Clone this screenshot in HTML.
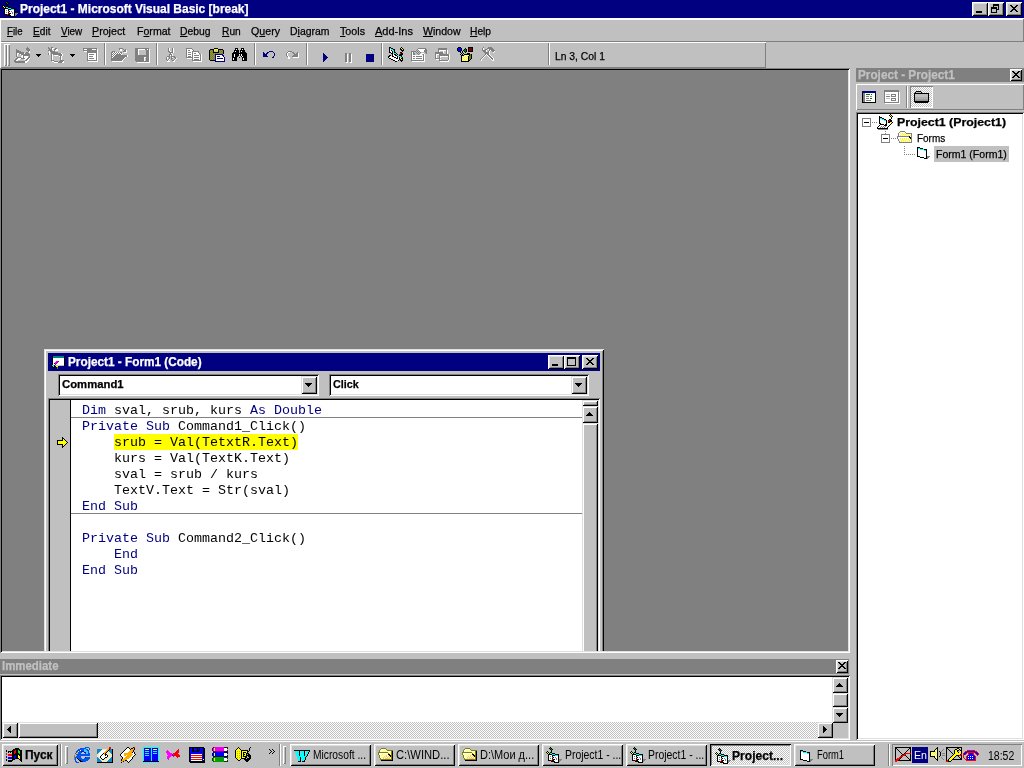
<!DOCTYPE html>
<html><head><meta charset="utf-8"><title>Project1 - Microsoft Visual Basic [break]</title>
<style>
*{box-sizing:border-box;margin:0;padding:0}
html,body{width:1024px;height:768px;overflow:hidden;background:#c0c0c0;font-family:"Liberation Sans",sans-serif;font-size:11px;color:#000}
.a{position:absolute}
svg{position:absolute;shape-rendering:crispEdges;overflow:visible}
.t{position:absolute;white-space:nowrap;line-height:14px;will-change:transform}
.b{font-weight:bold;-webkit-text-stroke:0}
.t{-webkit-text-stroke:0.25px}
.ns{-webkit-text-stroke:0}
.sx{display:inline-block;transform-origin:0 0}
.raised{box-shadow:inset 1px 1px #dfdfdf,inset -1px -1px #000,inset 2px 2px #fff,inset -2px -2px #808080;background:#c0c0c0}
.btn{box-shadow:inset 1px 1px #fff,inset -1px -1px #000,inset 2px 2px #dfdfdf,inset -2px -2px #808080;background:#c0c0c0}
.sbtn{box-shadow:inset 1px 1px #dfdfdf,inset -1px -1px #000,inset 2px 2px #fff,inset -2px -2px #808080;background:#c0c0c0}
.sunk{box-shadow:inset 1px 1px #808080,inset -1px -1px #fff,inset 2px 2px #000,inset -2px -2px #dfdfdf}
.pressed{box-shadow:inset 1px 1px #000,inset -1px -1px #fff,inset 2px 2px #808080,inset -2px -2px #dfdfdf}
.thin-r{box-shadow:inset 1px 1px #fff,inset -1px -1px #808080}
.thin-s{box-shadow:inset 1px 1px #808080,inset -1px -1px #fff}
.dith{background-image:conic-gradient(#fff 25%,#c0c0c0 0 50%,#fff 0 75%,#c0c0c0 0);background-size:2px 2px}
.sep{position:absolute;width:2px;border-left:1px solid #808080;border-right:1px solid #fff}
u{text-decoration:underline;text-underline-offset:1px}
.code{font-family:"Liberation Mono",monospace;font-size:13.33px;line-height:16px;white-space:pre;position:absolute;will-change:transform}
.k{color:#000080}
</style></head><body>

<div class="a" style="left:0;top:0;width:1024px;height:18px;background:#000080"></div>
<div class="t b" id="ttl" style="left:20px;top:2px;color:#fff;font-size:12px;"><span class="sx" style="transform:scaleX(0.9969)">Project1 - Microsoft Visual Basic [break]</span></div>
<svg style="left:2px;top:1px" width="16" height="16" viewBox="0 0 16 16"><path fill="#000" d="M4 0h1v1h-1zM3 1h1v1h-1zM5 1h1v1h-1zM4 2h1v1h-1zM6 2h1v1h-1zM5 3h1v1h-1zM1 4h1v1h-1zM5 4h1v1h-1zM0 5h1v1h-1zM2 5h1v1h-1zM4 5h2v1h-2zM1 6h1v1h-1zM3 6h1v1h-1zM6 6h3v1h-3zM2 7h4v1h-4zM9 7h4v1h-4zM2 8h1v1h-1zM6 8h3v1h-3zM12 8h1v1h-1zM2 9h1v1h-1zM6 9h1v1h-1zM12 9h1v1h-1zM2 10h1v1h-1zM7 10h1v1h-1zM12 10h1v1h-1zM2 11h1v1h-1zM6 11h1v1h-1zM12 11h1v1h-1zM2 12h1v1h-1zM7 12h2v1h-2zM12 12h1v1h-1zM2 13h3v1h-3zM6 13h2v1h-2zM12 13h1v1h-1zM5 14h4v1h-4zM12 14h1v1h-1zM8 15h5v1h-5z"/><path fill="#008000" d="M4 1h1v1h-1zM5 2h1v1h-1z"/><path fill="#ffff00" d="M1 5h1v1h-1zM2 6h1v1h-1z"/><path fill="#00ffff" d="M4 6h2v1h-2zM6 7h3v1h-3zM9 8h3v1h-3z"/><path fill="#fff" d="M3 8h3v1h-3zM3 9h1v1h-1zM5 9h1v1h-1zM7 9h5v1h-5zM3 10h3v1h-3zM8 10h1v1h-1zM10 10h2v1h-2zM3 11h1v1h-1zM5 11h1v1h-1zM7 11h3v1h-3zM11 11h1v1h-1zM3 12h3v1h-3zM9 12h1v1h-1zM11 12h1v1h-1zM8 13h4v1h-4zM9 14h3v1h-3z"/><path fill="#808080" d="M4 9h1v1h-1zM6 10h1v1h-1zM9 10h1v1h-1zM4 11h1v1h-1zM10 11h1v1h-1zM10 12h1v1h-1zM13 12h3v1h-3zM13 13h2v1h-2zM13 14h1v1h-1z"/><path fill="#ff0000" d="M6 12h1v1h-1zM5 13h1v1h-1z"/></svg>
<div class="a btn" style="left:972px;top:2px;width:16px;height:14px"></div>
<div class="a btn" style="left:988px;top:2px;width:16px;height:14px"></div>
<div class="a btn" style="left:1006px;top:2px;width:16px;height:14px"></div>
<svg style="left:976px;top:11px" width="6" height="2" viewBox="0 0 6 2"><path fill="#000" d="M0 0h6v1h-6zM0 1h6v1h-6z"/></svg>
<svg style="left:991px;top:4px" width="8" height="9" viewBox="0 0 8 9"><path fill="#000" d="M2 0h6v1h-6zM2 1h6v1h-6zM2 2h1v1h-1zM7 2h1v1h-1zM0 3h6v1h-6zM7 3h1v1h-1zM0 4h6v1h-6zM7 4h1v1h-1zM0 5h1v1h-1zM5 5h3v1h-3zM0 6h1v1h-1zM5 6h1v1h-1zM0 7h1v1h-1zM5 7h1v1h-1zM0 8h6v1h-6z"/></svg>
<svg style="left:1010px;top:5px" width="8" height="7" viewBox="0 0 8 7"><path fill="#000" d="M0 0h2v1h-2zM6 0h2v1h-2zM1 1h2v1h-2zM5 1h2v1h-2zM2 2h4v1h-4zM3 3h2v1h-2zM2 4h4v1h-4zM1 5h2v1h-2zM5 5h2v1h-2zM0 6h2v1h-2zM6 6h2v1h-2z"/></svg>
<div class="a" style="left:0;top:18px;width:1024px;height:2px;background:#fff"></div>
<div class="t m" id="m0" style="left:7px;top:24px"><span class="sx" style="transform:scaleX(0.8732)"><u>F</u>ile</span></div>
<div class="t m" id="m1" style="left:33px;top:24px"><span class="sx" style="transform:scaleX(0.9226)"><u>E</u>dit</span></div>
<div class="t m" id="m2" style="left:61px;top:24px"><span class="sx" style="transform:scaleX(0.8983)"><u>V</u>iew</span></div>
<div class="t m" id="m3" style="left:92px;top:24px"><span class="sx" style="transform:scaleX(0.9708)"><u>P</u>roject</span></div>
<div class="t m" id="m4" style="left:137px;top:24px"><span class="sx" style="transform:scaleX(0.961)">F<u>o</u>rmat</span></div>
<div class="t m" id="m5" style="left:180px;top:24px"><span class="sx" style="transform:scaleX(0.9403)"><u>D</u>ebug</span></div>
<div class="t m" id="m6" style="left:222px;top:24px"><span class="sx" style="transform:scaleX(0.9281)"><u>R</u>un</span></div>
<div class="t m" id="m7" style="left:251px;top:24px"><span class="sx" style="transform:scaleX(0.9677)">Q<u>u</u>ery</span></div>
<div class="t m" id="m8" style="left:290px;top:24px"><span class="sx" style="transform:scaleX(0.9497)">D<u>i</u>agram</span></div>
<div class="t m" id="m9" style="left:340px;top:24px"><span class="sx" style="transform:scaleX(0.9732)"><u>T</u>ools</span></div>
<div class="t m" id="m10" style="left:375px;top:24px"><span class="sx" style="transform:scaleX(1.0021)"><u>A</u>dd-Ins</span></div>
<div class="t m" id="m11" style="left:423px;top:24px"><span class="sx" style="transform:scaleX(0.9581)"><u>W</u>indow</span></div>
<div class="t m" id="m12" style="left:470px;top:24px"><span class="sx" style="transform:scaleX(0.9275)"><u>H</u>elp</span></div>
<div class="a" style="left:0;top:41px;width:1024px;height:1px;background:#808080"></div>
<div class="a" style="left:1023px;top:19px;width:1px;height:23px;background:#808080"></div>
<div class="a" style="left:0;top:19px;width:1px;height:23px;background:#fff"></div>
<div class="a thin-r" style="left:0;top:42px;width:766px;height:26px"></div>
<div class="a thin-r" style="left:4px;top:44px;width:3px;height:22px"></div>
<div class="a thin-r" style="left:7px;top:44px;width:3px;height:22px"></div>
<div class="sep" style="left:104px;top:43px;height:22px"></div>
<div class="sep" style="left:156px;top:43px;height:22px"></div>
<div class="sep" style="left:254px;top:43px;height:22px"></div>
<div class="sep" style="left:306px;top:43px;height:22px"></div>
<div class="sep" style="left:381px;top:43px;height:22px"></div>
<div class="sep" style="left:548px;top:43px;height:22px"></div>
<div class="t" id="lncol" style="left:555px;top:49px"><span class="sx" style="transform:scaleX(0.9398)">Ln 3, Col 1</span></div>
<svg style="left:14px;top:47px" width="17" height="16" viewBox="0 0 17 16"><path fill="#808080" d="M13 0h1v1h-1zM12 1h3v1h-3zM2 2h1v1h-1zM12 2h4v1h-4zM2 3h3v1h-3zM13 3h3v1h-3zM2 4h5v1h-5zM14 4h1v1h-1zM2 5h8v1h-8zM12 5h2v1h-2zM2 6h1v1h-1zM5 6h5v1h-5zM11 6h4v1h-4zM2 7h1v1h-1zM7 7h9v1h-9zM2 8h1v1h-1zM9 8h7v1h-7zM2 9h1v1h-1zM9 9h1v1h-1zM15 9h1v1h-1zM3 10h4v1h-4zM9 10h1v1h-1zM14 10h2v1h-2zM2 11h2v1h-2zM7 11h4v1h-4zM13 11h2v1h-2zM1 12h2v1h-2zM12 12h2v1h-2zM0 13h2v1h-2zM11 13h2v1h-2zM0 14h11v1h-11zM1 15h10v1h-10z"/><path fill="#fff" d="M15 4h1v1h-1zM15 5h1v1h-1zM3 6h2v1h-2zM10 6h1v1h-1zM3 7h1v1h-1zM6 7h1v1h-1zM3 8h1v1h-1zM8 8h1v1h-1zM7 9h2v1h-2zM10 9h4v1h-4zM8 10h1v1h-1zM10 10h4v1h-4zM4 11h3v1h-3zM11 11h2v1h-2zM15 11h1v1h-1zM3 12h3v1h-3zM10 12h2v1h-2zM14 12h1v1h-1zM2 13h2v1h-2zM13 13h2v1h-2zM11 14h3v1h-3zM11 15h2v1h-2z"/></svg>
<svg style="left:36px;top:54px" width="5" height="3" viewBox="0 0 5 3"><path fill="#000" d="M0 0h5v1h-5zM1 1h3v1h-3zM2 2h1v1h-1z"/></svg>
<svg style="left:48px;top:47px" width="16" height="16" viewBox="0 0 16 16"><path fill="#808080" d="M0 0h1v1h-1zM3 0h2v1h-2zM0 1h2v1h-2zM3 1h1v1h-1zM7 1h2v1h-2zM1 2h3v1h-3zM6 2h2v1h-2zM0 3h4v1h-4zM6 3h1v1h-1zM2 4h5v1h-5zM3 5h7v1h-7zM0 6h1v1h-1zM3 6h10v1h-10zM0 7h1v1h-1zM3 7h1v1h-1zM5 7h9v1h-9zM3 8h1v1h-1zM11 8h3v1h-3zM3 9h1v1h-1zM12 9h1v1h-1zM3 10h1v1h-1zM12 10h1v1h-1zM3 11h1v1h-1zM12 11h1v1h-1zM3 12h1v1h-1zM12 12h1v1h-1zM3 13h3v1h-3zM12 13h4v1h-4zM6 14h4v1h-4zM11 14h4v1h-4zM10 15h4v1h-4z"/><path fill="#fff" d="M4 1h2v1h-2zM4 2h1v1h-1zM8 2h2v1h-2zM5 3h1v1h-1zM7 3h3v1h-3zM1 4h1v1h-1zM1 5h1v1h-1zM1 6h1v1h-1zM13 6h1v1h-1zM1 7h1v1h-1zM4 7h1v1h-1zM14 7h1v1h-1zM4 8h1v1h-1zM6 8h4v1h-4zM14 8h1v1h-1zM4 9h1v1h-1zM11 9h1v1h-1zM13 9h1v1h-1zM4 10h1v1h-1zM13 10h1v1h-1zM4 11h1v1h-1zM13 11h1v1h-1zM4 12h1v1h-1zM13 12h1v1h-1zM4 14h2v1h-2zM15 14h1v1h-1zM6 15h4v1h-4zM14 15h2v1h-2z"/></svg>
<svg style="left:70px;top:54px" width="5" height="3" viewBox="0 0 5 3"><path fill="#000" d="M0 0h5v1h-5zM1 1h3v1h-3zM2 2h1v1h-1z"/></svg>
<svg style="left:83px;top:48px" width="15" height="14" viewBox="0 0 15 14"><path fill="#808080" d="M0 0h14v1h-14zM0 1h1v1h-1zM4 1h5v1h-5zM13 1h1v1h-1zM0 2h14v1h-14zM4 3h10v1h-10zM4 4h10v1h-10zM4 5h1v1h-1zM13 5h1v1h-1zM4 6h1v1h-1zM6 6h5v1h-5zM13 6h1v1h-1zM4 7h1v1h-1zM13 7h1v1h-1zM4 8h1v1h-1zM6 8h4v1h-4zM13 8h1v1h-1zM4 9h1v1h-1zM13 9h1v1h-1zM4 10h1v1h-1zM6 10h5v1h-5zM13 10h1v1h-1zM4 11h1v1h-1zM13 11h1v1h-1zM4 12h10v1h-10z"/><path fill="#fff" d="M1 1h3v1h-3zM9 1h4v1h-4zM14 1h1v1h-1zM14 2h1v1h-1zM1 3h3v1h-3zM14 3h1v1h-1zM14 4h1v1h-1zM5 5h8v1h-8zM14 5h1v1h-1zM5 6h1v1h-1zM11 6h2v1h-2zM14 6h1v1h-1zM5 7h8v1h-8zM14 7h1v1h-1zM5 8h1v1h-1zM10 8h3v1h-3zM14 8h1v1h-1zM5 9h8v1h-8zM14 9h1v1h-1zM5 10h1v1h-1zM11 10h2v1h-2zM14 10h1v1h-1zM5 11h8v1h-8zM14 11h1v1h-1zM14 12h1v1h-1zM5 13h10v1h-10z"/></svg>
<svg style="left:111px;top:48px" width="17" height="14" viewBox="0 0 17 14"><path fill="#808080" d="M8 0h4v1h-4zM8 1h1v1h-1zM12 1h1v1h-1zM14 1h1v1h-1zM13 2h2v1h-2zM1 3h3v1h-3zM12 3h3v1h-3zM0 4h2v1h-2zM3 4h1v1h-1zM5 4h1v1h-1zM7 4h1v1h-1zM9 4h2v1h-2zM0 5h1v1h-1zM2 5h1v1h-1zM4 5h1v1h-1zM6 5h1v1h-1zM8 5h1v1h-1zM10 5h1v1h-1zM0 6h2v1h-2zM3 6h1v1h-1zM5 6h5v1h-5zM0 7h1v1h-1zM2 7h1v1h-1zM4 7h12v1h-12zM0 8h2v1h-2zM3 8h13v1h-13zM0 9h1v1h-1zM2 9h12v1h-12zM0 10h13v1h-13zM0 11h12v1h-12zM0 12h11v1h-11z"/><path fill="#fff" d="M9 1h2v1h-2zM9 2h2v1h-2zM15 2h1v1h-1zM15 3h1v1h-1zM2 4h1v1h-1zM4 4h1v1h-1zM6 4h1v1h-1zM8 4h1v1h-1zM13 4h3v1h-3zM1 5h1v1h-1zM3 5h1v1h-1zM5 5h1v1h-1zM7 5h1v1h-1zM9 5h1v1h-1zM11 5h1v1h-1zM2 6h1v1h-1zM4 6h1v1h-1zM10 6h1v1h-1zM1 7h1v1h-1zM3 7h1v1h-1zM16 7h1v1h-1zM2 8h1v1h-1zM16 8h1v1h-1zM1 9h1v1h-1zM14 9h1v1h-1zM13 10h1v1h-1zM12 11h1v1h-1zM11 12h1v1h-1zM1 13h11v1h-11z"/></svg>
<svg style="left:135px;top:48px" width="15" height="15" viewBox="0 0 15 15"><path fill="#808080" d="M0 0h14v1h-14zM0 1h3v1h-3zM10 1h2v1h-2zM13 1h1v1h-1zM0 2h3v1h-3zM11 2h3v1h-3zM0 3h3v1h-3zM11 3h3v1h-3zM0 4h3v1h-3zM11 4h3v1h-3zM0 5h3v1h-3zM11 5h3v1h-3zM0 6h3v1h-3zM11 6h3v1h-3zM0 7h14v1h-14zM0 8h14v1h-14zM0 9h9v1h-9zM11 9h3v1h-3zM0 10h9v1h-9zM11 10h3v1h-3zM0 11h9v1h-9zM11 11h3v1h-3zM0 12h9v1h-9zM11 12h3v1h-3zM1 13h13v1h-13z"/><path fill="#fff" d="M3 1h7v1h-7zM12 1h1v1h-1zM14 1h1v1h-1zM3 2h1v1h-1zM14 2h1v1h-1zM3 3h1v1h-1zM14 3h1v1h-1zM3 4h1v1h-1zM14 4h1v1h-1zM3 5h1v1h-1zM14 5h1v1h-1zM3 6h1v1h-1zM14 6h1v1h-1zM14 7h1v1h-1zM14 8h1v1h-1zM9 9h2v1h-2zM14 9h1v1h-1zM9 10h1v1h-1zM14 10h1v1h-1zM9 11h1v1h-1zM14 11h1v1h-1zM9 12h1v1h-1zM14 12h1v1h-1zM14 13h1v1h-1zM2 14h13v1h-13z"/></svg>
<svg style="left:166px;top:48px" width="11" height="14" viewBox="0 0 11 14"><path fill="#808080" d="M2 0h1v1h-1zM6 0h1v1h-1zM2 1h1v1h-1zM6 1h1v1h-1zM2 2h1v1h-1zM6 2h1v1h-1zM2 3h2v1h-2zM6 3h1v1h-1zM3 4h4v1h-4zM4 5h1v1h-1zM3 6h3v1h-3zM3 7h1v1h-1zM5 7h1v1h-1zM1 8h3v1h-3zM5 8h4v1h-4zM0 9h1v1h-1zM3 9h1v1h-1zM5 9h1v1h-1zM8 9h2v1h-2zM0 10h1v1h-1zM3 10h1v1h-1zM5 10h2v1h-2zM9 10h1v1h-1zM0 11h1v1h-1zM2 11h1v1h-1zM5 11h1v1h-1zM8 11h1v1h-1zM1 12h1v1h-1zM6 12h2v1h-2z"/><path fill="#fff" d="M3 0h1v1h-1zM7 0h1v1h-1zM3 1h1v1h-1zM7 1h1v1h-1zM3 2h1v1h-1zM7 2h1v1h-1zM4 3h1v1h-1zM7 3h1v1h-1zM7 4h1v1h-1zM5 5h1v1h-1zM6 6h1v1h-1zM4 7h1v1h-1zM6 7h1v1h-1zM1 9h1v1h-1zM6 9h1v1h-1zM1 10h1v1h-1zM10 10h1v1h-1zM3 11h1v1h-1zM9 11h1v1h-1zM2 12h1v1h-1zM8 12h1v1h-1zM1 13h3v1h-3zM7 13h2v1h-2z"/></svg>
<svg style="left:186px;top:48px" width="16" height="14" viewBox="0 0 16 14"><path fill="#808080" d="M0 0h6v1h-6zM0 1h1v1h-1zM6 1h1v1h-1zM0 2h1v1h-1zM2 2h2v1h-2zM7 2h1v1h-1zM0 3h1v1h-1zM6 3h7v1h-7zM0 4h1v1h-1zM2 4h3v1h-3zM6 4h1v1h-1zM12 4h1v1h-1zM0 5h1v1h-1zM6 5h1v1h-1zM8 5h2v1h-2zM13 5h1v1h-1zM0 6h1v1h-1zM2 6h3v1h-3zM6 6h1v1h-1zM14 6h1v1h-1zM0 7h1v1h-1zM6 7h1v1h-1zM8 7h5v1h-5zM14 7h1v1h-1zM0 8h1v1h-1zM2 8h3v1h-3zM6 8h1v1h-1zM14 8h1v1h-1zM0 9h7v1h-7zM8 9h5v1h-5zM14 9h1v1h-1zM6 10h1v1h-1zM14 10h1v1h-1zM6 11h1v1h-1zM8 11h5v1h-5zM14 11h1v1h-1zM6 12h9v1h-9z"/><path fill="#fff" d="M1 1h5v1h-5zM1 2h1v1h-1zM4 2h3v1h-3zM1 3h5v1h-5zM1 4h1v1h-1zM5 4h1v1h-1zM7 4h5v1h-5zM1 5h5v1h-5zM7 5h1v1h-1zM10 5h3v1h-3zM1 6h1v1h-1zM5 6h1v1h-1zM7 6h6v1h-6zM15 6h1v1h-1zM1 7h5v1h-5zM7 7h1v1h-1zM13 7h1v1h-1zM15 7h1v1h-1zM1 8h1v1h-1zM5 8h1v1h-1zM7 8h7v1h-7zM15 8h1v1h-1zM7 9h1v1h-1zM13 9h1v1h-1zM15 9h1v1h-1zM1 10h5v1h-5zM7 10h7v1h-7zM15 10h1v1h-1zM7 11h1v1h-1zM13 11h1v1h-1zM15 11h1v1h-1zM15 12h1v1h-1zM7 13h9v1h-9z"/></svg>
<svg style="left:209px;top:48px" width="16" height="14" viewBox="0 0 16 14"><path fill="#000" d="M5 0h4v1h-4zM1 1h4v1h-4zM9 1h5v1h-5zM0 2h1v1h-1zM4 2h1v1h-1zM9 2h1v1h-1zM14 2h1v1h-1zM0 3h1v1h-1zM4 3h1v1h-1zM9 3h1v1h-1zM14 3h1v1h-1zM0 4h1v1h-1zM4 4h6v1h-6zM14 4h1v1h-1zM0 5h1v1h-1zM14 5h1v1h-1zM0 6h1v1h-1zM0 7h1v1h-1zM0 8h1v1h-1zM0 9h1v1h-1zM0 10h1v1h-1zM0 11h1v1h-1zM1 12h5v1h-5z"/><path fill="#ffff00" d="M5 1h4v1h-4zM5 2h1v1h-1zM8 2h1v1h-1z"/><path fill="#808000" d="M1 2h1v1h-1zM3 2h1v1h-1zM11 2h1v1h-1zM13 2h1v1h-1zM2 3h1v1h-1zM10 3h1v1h-1zM12 3h1v1h-1zM1 4h1v1h-1zM3 4h1v1h-1zM11 4h1v1h-1zM13 4h1v1h-1zM2 5h1v1h-1zM4 5h1v1h-1zM6 5h1v1h-1zM8 5h1v1h-1zM10 5h1v1h-1zM12 5h1v1h-1zM1 6h1v1h-1zM3 6h1v1h-1zM5 6h1v1h-1zM2 7h1v1h-1zM4 7h1v1h-1zM1 8h1v1h-1zM3 8h1v1h-1zM5 8h1v1h-1zM2 9h1v1h-1zM4 9h1v1h-1zM1 10h1v1h-1zM3 10h1v1h-1zM5 10h1v1h-1zM2 11h1v1h-1zM4 11h1v1h-1z"/><path fill="#909070" d="M2 2h1v1h-1zM10 2h1v1h-1zM12 2h1v1h-1zM1 3h1v1h-1zM3 3h1v1h-1zM11 3h1v1h-1zM13 3h1v1h-1zM2 4h1v1h-1zM10 4h1v1h-1zM12 4h1v1h-1zM1 5h1v1h-1zM3 5h1v1h-1zM5 5h1v1h-1zM7 5h1v1h-1zM9 5h1v1h-1zM11 5h1v1h-1zM13 5h1v1h-1zM2 6h1v1h-1zM4 6h1v1h-1zM1 7h1v1h-1zM3 7h1v1h-1zM5 7h1v1h-1zM2 8h1v1h-1zM4 8h1v1h-1zM1 9h1v1h-1zM3 9h1v1h-1zM5 9h1v1h-1zM2 10h1v1h-1zM4 10h1v1h-1zM1 11h1v1h-1zM3 11h1v1h-1zM5 11h1v1h-1z"/><path fill="#c0c0c0" d="M5 3h4v1h-4z"/><path fill="#000080" d="M6 6h8v1h-8zM6 7h1v1h-1zM13 7h2v1h-2zM6 8h1v1h-1zM8 8h3v1h-3zM14 8h1v1h-1zM6 9h1v1h-1zM15 9h1v1h-1zM6 10h1v1h-1zM8 10h6v1h-6zM15 10h1v1h-1zM6 11h1v1h-1zM15 11h1v1h-1zM6 12h1v1h-1zM15 12h1v1h-1zM6 13h10v1h-10z"/><path fill="#fff" d="M7 7h6v1h-6zM7 8h1v1h-1zM11 8h3v1h-3zM7 9h8v1h-8zM7 10h1v1h-1zM14 10h1v1h-1zM7 11h8v1h-8zM7 12h8v1h-8z"/></svg>
<svg style="left:232px;top:48px" width="15" height="13" viewBox="0 0 15 13"><path fill="#000" d="M3 0h3v1h-3zM9 0h3v1h-3zM3 1h1v1h-1zM5 1h1v1h-1zM9 1h1v1h-1zM11 1h1v1h-1zM2 2h5v1h-5zM8 2h5v1h-5zM2 3h1v1h-1zM4 3h3v1h-3zM8 3h1v1h-1zM10 3h3v1h-3zM1 4h6v1h-6zM8 4h6v1h-6zM0 5h15v1h-15zM0 6h2v1h-2zM3 6h4v1h-4zM8 6h1v1h-1zM10 6h5v1h-5zM0 7h2v1h-2zM3 7h4v1h-4zM8 7h1v1h-1zM10 7h5v1h-5zM0 8h2v1h-2zM3 8h3v1h-3zM9 8h1v1h-1zM11 8h4v1h-4zM0 9h5v1h-5zM7 9h1v1h-1zM10 9h5v1h-5zM0 10h1v1h-1zM2 10h3v1h-3zM10 10h1v1h-1zM12 10h3v1h-3zM0 11h1v1h-1zM2 11h3v1h-3zM10 11h1v1h-1zM12 11h3v1h-3zM0 12h5v1h-5zM10 12h5v1h-5z"/><path fill="#fff" d="M4 1h1v1h-1zM10 1h1v1h-1zM3 3h1v1h-1zM9 3h1v1h-1zM2 6h1v1h-1zM7 6h1v1h-1zM9 6h1v1h-1zM2 7h1v1h-1zM9 7h1v1h-1zM2 8h1v1h-1zM10 8h1v1h-1zM1 10h1v1h-1zM11 10h1v1h-1zM1 11h1v1h-1zM11 11h1v1h-1z"/></svg>
<svg style="left:263px;top:51px" width="12" height="7" viewBox="0 0 12 7"><path fill="#000080" d="M6 0h4v1h-4zM0 1h1v1h-1zM4 1h2v1h-2zM10 1h1v1h-1zM0 2h2v1h-2zM3 2h2v1h-2zM11 2h1v1h-1zM0 3h4v1h-4zM11 3h1v1h-1zM0 4h4v1h-4zM11 4h1v1h-1zM0 5h5v1h-5zM10 5h1v1h-1zM9 6h2v1h-2z"/></svg>
<svg style="left:286px;top:51px" width="13" height="8" viewBox="0 0 13 8"><path fill="#808080" d="M2 0h4v1h-4zM1 1h1v1h-1zM6 1h2v1h-2zM11 1h1v1h-1zM0 2h1v1h-1zM7 2h2v1h-2zM10 2h2v1h-2zM0 3h1v1h-1zM8 3h4v1h-4zM0 4h1v1h-1zM7 4h5v1h-5zM1 5h1v1h-1zM6 5h6v1h-6z"/><path fill="#fff" d="M2 1h2v1h-2zM1 2h1v1h-1zM12 2h1v1h-1zM1 3h1v1h-1zM12 3h1v1h-1zM1 4h1v1h-1zM12 4h1v1h-1zM2 5h1v1h-1zM12 5h1v1h-1zM2 6h2v1h-2zM7 6h6v1h-6zM2 7h2v1h-2z"/></svg>
<svg style="left:323px;top:53px" width="5" height="9" viewBox="0 0 5 9"><path fill="#000080" d="M0 0h1v1h-1zM0 1h2v1h-2zM0 2h3v1h-3zM0 3h4v1h-4zM0 4h5v1h-5zM0 5h4v1h-4zM0 6h3v1h-3zM0 7h2v1h-2zM0 8h1v1h-1z"/></svg>
<svg style="left:345px;top:53px" width="7" height="10" viewBox="0 0 7 10"><path fill="#808080" d="M0 0h2v1h-2zM4 0h2v1h-2zM0 1h2v1h-2zM4 1h2v1h-2zM0 2h2v1h-2zM4 2h2v1h-2zM0 3h2v1h-2zM4 3h2v1h-2zM0 4h2v1h-2zM4 4h2v1h-2zM0 5h2v1h-2zM4 5h2v1h-2zM0 6h2v1h-2zM4 6h2v1h-2zM0 7h2v1h-2zM4 7h2v1h-2zM0 8h2v1h-2zM4 8h2v1h-2z"/><path fill="#fff" d="M2 1h1v1h-1zM6 1h1v1h-1zM2 2h1v1h-1zM6 2h1v1h-1zM2 3h1v1h-1zM6 3h1v1h-1zM2 4h1v1h-1zM6 4h1v1h-1zM2 5h1v1h-1zM6 5h1v1h-1zM2 6h1v1h-1zM6 6h1v1h-1zM2 7h1v1h-1zM6 7h1v1h-1zM2 8h1v1h-1zM6 8h1v1h-1zM1 9h2v1h-2zM5 9h2v1h-2z"/></svg>
<svg style="left:366px;top:54px" width="8" height="8" viewBox="0 0 8 8"><path fill="#000080" d="M0 0h8v1h-8zM0 1h8v1h-8zM0 2h8v1h-8zM0 3h8v1h-8zM0 4h8v1h-8zM0 5h8v1h-8zM0 6h8v1h-8zM0 7h8v1h-8z"/></svg>
<svg style="left:388px;top:47px" width="17" height="15" viewBox="0 0 17 15"><path fill="#000" d="M1 0h2v1h-2zM13 0h1v1h-1zM1 1h1v1h-1zM3 1h2v1h-2zM12 1h1v1h-1zM14 1h1v1h-1zM1 2h1v1h-1zM5 2h2v1h-2zM12 2h2v1h-2zM15 2h1v1h-1zM1 3h1v1h-1zM3 3h1v1h-1zM6 3h1v1h-1zM13 3h3v1h-3zM1 4h1v1h-1zM4 4h1v1h-1zM6 4h1v1h-1zM14 4h1v1h-1zM1 5h2v1h-2zM4 5h1v1h-1zM6 5h2v1h-2zM12 5h2v1h-2zM3 6h2v1h-2zM8 6h1v1h-1zM13 6h2v1h-2zM4 7h1v1h-1zM6 7h2v1h-2zM9 7h1v1h-1zM12 7h3v1h-3zM1 8h2v1h-2zM4 8h1v1h-1zM7 8h2v1h-2zM11 8h3v1h-3zM0 9h2v1h-2zM4 9h2v1h-2zM9 9h1v1h-1zM13 9h1v1h-1zM0 10h1v1h-1zM6 10h2v1h-2zM9 10h1v1h-1zM11 10h1v1h-1zM14 10h1v1h-1zM1 11h2v1h-2zM8 11h2v1h-2zM11 11h1v1h-1zM13 11h2v1h-2zM3 12h2v1h-2zM11 12h2v1h-2zM14 12h1v1h-1zM5 13h2v1h-2zM10 13h1v1h-1zM12 13h3v1h-3zM7 14h2v1h-2zM13 14h1v1h-1z"/><path fill="#00ffff" d="M2 1h1v1h-1zM3 2h2v1h-2zM5 3h1v1h-1zM5 5h1v1h-1zM6 6h2v1h-2zM8 7h1v1h-1zM10 8h1v1h-1zM11 9h2v1h-2zM13 10h1v1h-1z"/><path fill="#ffff00" d="M13 1h1v1h-1zM14 2h1v1h-1zM12 11h1v1h-1zM13 12h1v1h-1z"/><path fill="#fff" d="M2 2h1v1h-1zM2 3h1v1h-1zM2 4h2v1h-2zM3 5h1v1h-1zM5 7h1v1h-1zM5 8h2v1h-2zM2 9h2v1h-2zM6 9h3v1h-3zM1 10h5v1h-5zM8 10h1v1h-1zM10 10h1v1h-1zM3 11h5v1h-5zM10 11h1v1h-1zM5 12h6v1h-6zM7 13h3v1h-3z"/><path fill="#ff0000" d="M12 6h1v1h-1zM11 7h1v1h-1z"/></svg>
<svg style="left:411px;top:48px" width="16" height="14" viewBox="0 0 16 14"><path fill="#808080" d="M7 0h8v1h-8zM6 1h1v1h-1zM14 1h2v1h-2zM5 2h1v1h-1zM7 2h1v1h-1zM13 2h3v1h-3zM0 3h5v1h-5zM6 3h1v1h-1zM8 3h1v1h-1zM13 3h3v1h-3zM0 4h1v1h-1zM2 4h1v1h-1zM5 4h1v1h-1zM7 4h1v1h-1zM9 4h1v1h-1zM14 4h2v1h-2zM0 5h1v1h-1zM2 5h2v1h-2zM6 5h1v1h-1zM8 5h1v1h-1zM15 5h1v1h-1zM0 6h1v1h-1zM2 6h2v1h-2zM7 6h1v1h-1zM12 6h1v1h-1zM0 7h1v1h-1zM12 7h1v1h-1zM0 8h1v1h-1zM2 8h2v1h-2zM5 8h6v1h-6zM12 8h1v1h-1zM0 9h1v1h-1zM12 9h1v1h-1zM0 10h1v1h-1zM2 10h2v1h-2zM5 10h6v1h-6zM12 10h1v1h-1zM0 11h1v1h-1zM12 11h1v1h-1zM0 12h13v1h-13z"/><path fill="#fff" d="M7 1h7v1h-7zM8 2h5v1h-5zM9 3h4v1h-4zM1 4h1v1h-1zM1 5h1v1h-1zM10 5h3v1h-3zM1 6h1v1h-1zM9 6h2v1h-2zM13 6h1v1h-1zM1 7h11v1h-11zM13 7h1v1h-1zM1 8h1v1h-1zM4 8h1v1h-1zM11 8h1v1h-1zM13 8h1v1h-1zM1 9h11v1h-11zM13 9h1v1h-1zM1 10h1v1h-1zM4 10h1v1h-1zM11 10h1v1h-1zM13 10h1v1h-1zM1 11h11v1h-11zM13 11h1v1h-1zM13 12h1v1h-1zM1 13h13v1h-13z"/></svg>
<svg style="left:435px;top:48px" width="15" height="14" viewBox="0 0 15 14"><path fill="#808080" d="M3 0h9v1h-9zM3 1h9v1h-9zM3 2h1v1h-1zM11 2h1v1h-1zM3 3h1v1h-1zM11 3h1v1h-1zM0 4h8v1h-8zM11 4h1v1h-1zM0 5h8v1h-8zM11 5h1v1h-1zM0 6h1v1h-1zM4 6h10v1h-10zM0 7h1v1h-1zM4 7h10v1h-10zM0 8h1v1h-1zM4 8h1v1h-1zM13 8h1v1h-1zM0 9h1v1h-1zM4 9h1v1h-1zM13 9h1v1h-1zM0 10h5v1h-5zM13 10h1v1h-1zM4 11h1v1h-1zM13 11h1v1h-1zM4 12h9v1h-9z"/><path fill="#fff" d="M4 2h7v1h-7zM12 2h1v1h-1zM4 3h1v1h-1zM8 3h1v1h-1zM12 3h1v1h-1zM8 4h1v1h-1zM12 4h1v1h-1zM12 5h1v1h-1zM1 6h3v1h-3zM14 6h1v1h-1zM1 7h1v1h-1zM14 7h1v1h-1zM1 8h1v1h-1zM5 8h8v1h-8zM14 8h1v1h-1zM1 9h1v1h-1zM5 9h1v1h-1zM14 9h1v1h-1zM14 10h1v1h-1zM1 11h3v1h-3zM5 11h1v1h-1zM14 11h1v1h-1zM13 12h1v1h-1zM5 13h9v1h-9z"/></svg>
<svg style="left:457px;top:47px" width="16" height="15" viewBox="0 0 16 15"><path fill="#000" d="M1 0h3v1h-3zM11 0h5v1h-5zM0 1h1v1h-1zM4 1h1v1h-1zM8 1h1v1h-1zM11 1h1v1h-1zM15 1h1v1h-1zM0 2h1v1h-1zM4 2h1v1h-1zM7 2h1v1h-1zM9 2h1v1h-1zM11 2h1v1h-1zM15 2h1v1h-1zM0 3h1v1h-1zM4 3h1v1h-1zM6 3h1v1h-1zM9 3h1v1h-1zM11 3h1v1h-1zM15 3h1v1h-1zM1 4h3v1h-3zM5 4h1v1h-1zM7 4h1v1h-1zM9 4h1v1h-1zM11 4h5v1h-5zM3 5h1v1h-1zM5 5h1v1h-1zM8 5h1v1h-1zM4 6h1v1h-1zM6 6h1v1h-1zM10 6h3v1h-3zM3 7h1v1h-1zM5 7h1v1h-1zM7 7h6v1h-6zM14 7h1v1h-1zM4 8h3v1h-3zM12 8h1v1h-1zM14 8h1v1h-1zM4 9h1v1h-1zM11 9h1v1h-1zM14 9h1v1h-1zM4 10h1v1h-1zM11 10h1v1h-1zM14 10h1v1h-1zM4 11h1v1h-1zM11 11h1v1h-1zM14 11h1v1h-1zM4 12h1v1h-1zM11 12h1v1h-1zM13 12h1v1h-1zM4 13h1v1h-1zM11 13h2v1h-2zM4 14h8v1h-8z"/><path fill="#0000ff" d="M1 1h3v1h-3zM1 2h3v1h-3zM1 3h3v1h-3z"/><path fill="#800000" d="M12 1h3v1h-3zM12 2h3v1h-3zM12 3h3v1h-3z"/><path fill="#008000" d="M8 2h1v1h-1zM7 3h2v1h-2zM8 4h1v1h-1z"/><path fill="#808000" d="M13 7h1v1h-1zM13 8h1v1h-1zM12 9h2v1h-2zM12 10h2v1h-2zM12 11h2v1h-2zM12 12h1v1h-1z"/><path fill="#ffff00" d="M7 8h1v1h-1zM9 8h1v1h-1zM11 8h1v1h-1zM6 9h1v1h-1zM8 9h1v1h-1zM10 9h1v1h-1zM5 10h1v1h-1zM7 10h1v1h-1zM9 10h1v1h-1zM6 11h1v1h-1zM8 11h1v1h-1zM10 11h1v1h-1zM5 12h1v1h-1zM7 12h1v1h-1zM9 12h1v1h-1zM6 13h1v1h-1zM8 13h1v1h-1zM10 13h1v1h-1z"/><path fill="#fff" d="M8 8h1v1h-1zM10 8h1v1h-1zM5 9h1v1h-1zM7 9h1v1h-1zM9 9h1v1h-1zM6 10h1v1h-1zM8 10h1v1h-1zM10 10h1v1h-1zM5 11h1v1h-1zM7 11h1v1h-1zM9 11h1v1h-1zM6 12h1v1h-1zM8 12h1v1h-1zM10 12h1v1h-1zM5 13h1v1h-1zM7 13h1v1h-1zM9 13h1v1h-1z"/></svg>
<svg style="left:480px;top:47px" width="16" height="14" viewBox="0 0 16 14"><path fill="#808080" d="M3 0h1v1h-1zM8 0h4v1h-4zM2 1h1v1h-1zM7 1h6v1h-6zM2 2h1v1h-1zM5 2h2v1h-2zM9 2h5v1h-5zM2 3h4v1h-4zM9 3h1v1h-1zM11 3h4v1h-4zM3 4h3v1h-3zM8 4h1v1h-1zM12 4h2v1h-2zM4 5h5v1h-5zM5 6h4v1h-4zM5 7h1v1h-1zM7 7h2v1h-2zM4 8h1v1h-1zM8 8h2v1h-2zM3 9h1v1h-1zM9 9h2v1h-2zM2 10h1v1h-1zM10 10h2v1h-2zM1 11h1v1h-1zM11 11h2v1h-2zM0 12h1v1h-1zM12 12h1v1h-1z"/><path fill="#fff" d="M3 1h1v1h-1zM3 2h1v1h-1zM8 2h1v1h-1zM6 3h1v1h-1zM10 3h1v1h-1zM6 4h1v1h-1zM9 4h1v1h-1zM14 4h1v1h-1zM9 5h1v1h-1zM13 5h1v1h-1zM9 6h1v1h-1zM6 7h1v1h-1zM9 7h1v1h-1zM5 8h1v1h-1zM7 8h1v1h-1zM10 8h1v1h-1zM4 9h1v1h-1zM8 9h1v1h-1zM11 9h1v1h-1zM3 10h1v1h-1zM9 10h1v1h-1zM12 10h1v1h-1zM2 11h1v1h-1zM10 11h1v1h-1zM13 11h1v1h-1zM1 12h1v1h-1zM11 12h1v1h-1zM13 12h1v1h-1zM1 13h1v1h-1zM12 13h2v1h-2z"/></svg>
<div class="a sunk" style="left:0;top:68px;width:850px;height:585px;background:#808080"></div>
<div class="a" style="left:856px;top:68px;width:168px;height:14px;background:#808080"></div>
<div class="t b" id="ptl" style="left:858px;top:68px;color:#c0c0c0;font-size:12px"><span class="sx" style="transform:scaleX(0.9807)">Project - Project1</span></div>
<div class="a btn" style="left:1010px;top:69px;width:12px;height:12px"></div>
<svg style="left:1012px;top:71px" width="8" height="7" viewBox="0 0 8 7"><path fill="#000" d="M0 0h2v1h-2zM6 0h2v1h-2zM1 1h2v1h-2zM5 1h2v1h-2zM2 2h4v1h-4zM3 3h2v1h-2zM2 4h4v1h-4zM1 5h2v1h-2zM5 5h2v1h-2zM0 6h2v1h-2zM6 6h2v1h-2z"/></svg>
<div class="a thin-r" style="left:856px;top:84px;width:168px;height:26px"></div>
<div class="sep" style="left:906px;top:86px;height:22px"></div>
<div class="a thin-s dith" style="left:910px;top:86px;width:23px;height:22px"></div>
<svg style="left:862px;top:91px" width="14" height="12" viewBox="0 0 14 12"><path fill="#000080" d="M0 0h14v1h-14zM0 1h14v1h-14z"/><path fill="#000" d="M0 2h1v1h-1zM13 2h1v1h-1zM0 3h1v1h-1zM13 3h1v1h-1zM0 4h1v1h-1zM13 4h1v1h-1zM0 5h1v1h-1zM13 5h1v1h-1zM0 6h1v1h-1zM13 6h1v1h-1zM0 7h1v1h-1zM13 7h1v1h-1zM0 8h1v1h-1zM13 8h1v1h-1zM0 9h1v1h-1zM13 9h1v1h-1zM0 10h1v1h-1zM13 10h1v1h-1zM0 11h14v1h-14z"/><path fill="#808080" d="M1 2h2v1h-2zM1 3h2v1h-2zM1 4h2v1h-2zM1 5h2v1h-2zM4 5h3v1h-3zM8 5h2v1h-2zM1 6h2v1h-2zM1 7h2v1h-2zM4 7h3v1h-3zM1 8h2v1h-2zM1 9h2v1h-2zM4 9h5v1h-5zM1 10h2v1h-2z"/><path fill="#fff" d="M3 2h10v1h-10zM3 3h1v1h-1zM8 3h1v1h-1zM10 3h3v1h-3zM3 4h10v1h-10zM3 5h1v1h-1zM7 5h1v1h-1zM10 5h3v1h-3zM3 6h10v1h-10zM3 7h1v1h-1zM7 7h1v1h-1zM10 7h3v1h-3zM3 8h10v1h-10zM3 9h1v1h-1zM9 9h4v1h-4zM3 10h10v1h-10z"/><path fill="#008000" d="M4 3h4v1h-4zM9 3h1v1h-1zM8 7h2v1h-2z"/></svg>
<svg style="left:884px;top:90px" width="16" height="14" viewBox="0 0 16 14"><path fill="#808080" d="M0 0h15v1h-15zM0 1h15v1h-15zM0 2h1v1h-1zM14 2h1v1h-1zM0 3h1v1h-1zM14 3h1v1h-1zM0 4h1v1h-1zM7 4h5v1h-5zM14 4h1v1h-1zM0 5h1v1h-1zM7 5h1v1h-1zM11 5h1v1h-1zM14 5h1v1h-1zM0 6h1v1h-1zM2 6h4v1h-4zM7 6h5v1h-5zM14 6h1v1h-1zM0 7h1v1h-1zM14 7h1v1h-1zM0 8h1v1h-1zM7 8h5v1h-5zM14 8h1v1h-1zM0 9h1v1h-1zM7 9h1v1h-1zM11 9h1v1h-1zM14 9h1v1h-1zM0 10h1v1h-1zM7 10h5v1h-5zM14 10h1v1h-1zM0 11h1v1h-1zM14 11h1v1h-1zM0 12h15v1h-15z"/><path fill="#fff" d="M1 2h13v1h-13zM15 2h1v1h-1zM1 3h13v1h-13zM15 3h1v1h-1zM1 4h1v1h-1zM6 4h1v1h-1zM12 4h2v1h-2zM15 4h1v1h-1zM1 5h6v1h-6zM8 5h3v1h-3zM12 5h2v1h-2zM15 5h1v1h-1zM1 6h1v1h-1zM6 6h1v1h-1zM12 6h2v1h-2zM15 6h1v1h-1zM1 7h13v1h-13zM15 7h1v1h-1zM1 8h1v1h-1zM6 8h1v1h-1zM12 8h2v1h-2zM15 8h1v1h-1zM1 9h6v1h-6zM8 9h3v1h-3zM12 9h2v1h-2zM15 9h1v1h-1zM1 10h6v1h-6zM12 10h2v1h-2zM15 10h1v1h-1zM1 11h13v1h-13zM15 11h1v1h-1zM15 12h1v1h-1zM1 13h15v1h-15z"/><path fill="#c0c0c0" d="M2 4h4v1h-4zM2 8h4v1h-4z"/></svg>
<svg style="left:914px;top:91px" width="15" height="12" viewBox="0 0 15 12"><path fill="#000" d="M2 0h5v1h-5zM1 1h1v1h-1zM7 1h1v1h-1zM0 2h15v1h-15zM0 3h1v1h-1zM14 3h1v1h-1zM0 4h1v1h-1zM14 4h1v1h-1zM0 5h1v1h-1zM14 5h1v1h-1zM0 6h1v1h-1zM14 6h1v1h-1zM0 7h1v1h-1zM14 7h1v1h-1zM0 8h1v1h-1zM14 8h1v1h-1zM0 9h1v1h-1zM14 9h1v1h-1zM0 10h15v1h-15zM1 11h13v1h-13z"/><path fill="#c0c0c0" d="M2 1h5v1h-5zM1 3h13v1h-13zM1 4h13v1h-13zM1 5h13v1h-13z"/><path fill="#b0b0b0" d="M1 6h13v1h-13zM1 7h13v1h-13z"/><path fill="#a0a0a0" d="M1 8h13v1h-13z"/><path fill="#909090" d="M1 9h13v1h-13z"/></svg>
<div class="a sunk" style="left:856px;top:112px;width:168px;height:628px;background:#fff"></div>
<div class="a" style="left:934px;top:146px;width:75px;height:16px;background:#c0c0c0"></div>
<div class="t b" id="tr1" style="left:897px;top:115px;font-size:11px"><span class="sx" style="transform:scaleX(1.1214)">Project1 (Project1)</span></div>
<div class="t" id="tr2" style="left:917px;top:131px"><span class="sx" style="transform:scaleX(0.9047)">Forms</span></div>
<div class="t" id="tr3" style="left:936px;top:147px"><span class="sx" style="transform:scaleX(0.9574)">Form1 (Form1)</span></div>
<svg style="left:862px;top:118px" width="9" height="9" viewBox="0 0 9 9"><path fill="#808080" d="M0 0h9v1h-9zM0 1h1v1h-1zM8 1h1v1h-1zM0 2h1v1h-1zM8 2h1v1h-1zM0 3h1v1h-1zM8 3h1v1h-1zM0 4h1v1h-1zM8 4h1v1h-1zM0 5h1v1h-1zM8 5h1v1h-1zM0 6h1v1h-1zM8 6h1v1h-1zM0 7h1v1h-1zM8 7h1v1h-1zM0 8h9v1h-9z"/><path fill="#000" d="M2 4h5v1h-5z"/></svg>
<svg style="left:881px;top:134px" width="9" height="9" viewBox="0 0 9 9"><path fill="#808080" d="M0 0h9v1h-9zM0 1h1v1h-1zM8 1h1v1h-1zM0 2h1v1h-1zM8 2h1v1h-1zM0 3h1v1h-1zM8 3h1v1h-1zM0 4h1v1h-1zM8 4h1v1h-1zM0 5h1v1h-1zM8 5h1v1h-1zM0 6h1v1h-1zM8 6h1v1h-1zM0 7h1v1h-1zM8 7h1v1h-1zM0 8h9v1h-9z"/><path fill="#000" d="M2 4h5v1h-5z"/></svg>
<svg style="left:877px;top:114px" width="17" height="16" viewBox="0 0 17 16"><path fill="#000" d="M13 0h1v1h-1zM12 1h1v1h-1zM14 1h1v1h-1zM2 2h1v1h-1zM13 2h1v1h-1zM15 2h1v1h-1zM2 3h3v1h-3zM14 3h1v1h-1zM2 4h1v1h-1zM5 4h2v1h-2zM14 4h1v1h-1zM2 5h1v1h-1zM7 5h2v1h-2zM12 5h2v1h-2zM2 6h1v1h-1zM9 6h1v1h-1zM11 6h1v1h-1zM13 6h2v1h-2zM2 7h1v1h-1zM9 7h1v1h-1zM12 7h3v1h-3zM2 8h1v1h-1zM9 8h1v1h-1zM11 8h2v1h-2zM15 8h1v1h-1zM2 9h2v1h-2zM9 9h1v1h-1zM14 9h1v1h-1zM3 10h4v1h-4zM8 10h2v1h-2zM13 10h1v1h-1zM2 11h1v1h-1zM7 11h3v1h-3zM12 11h1v1h-1zM1 12h1v1h-1zM11 12h1v1h-1zM0 13h1v1h-1zM10 13h1v1h-1zM0 14h11v1h-11z"/><path fill="#ffff00" d="M13 1h1v1h-1zM14 2h1v1h-1zM10 8h1v1h-1zM13 8h2v1h-2z"/><path fill="#00ffff" d="M3 4h2v1h-2zM5 5h2v1h-2zM7 6h2v1h-2z"/><path fill="#fff" d="M3 5h2v1h-2zM3 6h4v1h-4zM3 7h6v1h-6zM3 8h6v1h-6zM4 9h5v1h-5zM10 9h4v1h-4zM7 10h1v1h-1zM10 10h3v1h-3zM3 11h4v1h-4zM10 11h2v1h-2zM2 12h2v1h-2zM5 12h1v1h-1zM7 12h1v1h-1zM9 12h2v1h-2zM1 13h2v1h-2zM4 13h1v1h-1zM6 13h1v1h-1zM8 13h2v1h-2z"/><path fill="#ff0000" d="M12 6h1v1h-1zM11 7h1v1h-1z"/><path fill="#808080" d="M4 12h1v1h-1zM6 12h1v1h-1zM8 12h1v1h-1zM3 13h1v1h-1zM5 13h1v1h-1zM7 13h1v1h-1zM1 15h10v1h-10z"/></svg>
<svg style="left:897px;top:131px" width="15" height="12" viewBox="0 0 15 12"><path fill="#808080" d="M3 0h5v1h-5zM2 1h1v1h-1zM8 1h1v1h-1zM1 2h1v1h-1zM9 2h6v1h-6zM1 3h1v1h-1zM14 3h1v1h-1zM1 4h1v1h-1zM14 4h1v1h-1zM0 5h12v1h-12zM14 5h1v1h-1zM0 6h1v1h-1zM14 6h1v1h-1zM0 7h1v1h-1zM14 7h1v1h-1zM1 8h1v1h-1zM14 8h1v1h-1zM1 9h1v1h-1zM14 9h1v1h-1zM2 10h1v1h-1zM14 10h1v1h-1zM2 11h13v1h-13z"/><path fill="#fff" d="M3 1h5v1h-5zM2 2h1v1h-1zM4 2h1v1h-1zM6 2h1v1h-1zM8 2h1v1h-1zM2 3h2v1h-2zM5 3h1v1h-1zM7 3h1v1h-1zM9 3h1v1h-1zM11 3h1v1h-1zM13 3h1v1h-1zM2 4h1v1h-1zM4 4h1v1h-1zM6 4h1v1h-1zM8 4h1v1h-1zM10 4h1v1h-1zM12 4h1v1h-1zM13 5h1v1h-1zM1 6h11v1h-11zM1 7h2v1h-2zM4 7h1v1h-1zM6 7h1v1h-1zM8 7h1v1h-1zM10 7h1v1h-1zM12 7h1v1h-1zM2 8h1v1h-1zM4 8h1v1h-1zM6 8h1v1h-1zM8 8h1v1h-1zM10 8h1v1h-1zM12 8h1v1h-1zM2 9h2v1h-2zM5 9h1v1h-1zM7 9h1v1h-1zM9 9h1v1h-1zM11 9h1v1h-1zM13 9h1v1h-1zM3 10h1v1h-1zM5 10h1v1h-1zM7 10h1v1h-1zM9 10h1v1h-1zM11 10h1v1h-1zM13 10h1v1h-1z"/><path fill="#ffff00" d="M3 2h1v1h-1zM5 2h1v1h-1zM7 2h1v1h-1zM4 3h1v1h-1zM6 3h1v1h-1zM8 3h1v1h-1zM10 3h1v1h-1zM12 3h1v1h-1zM3 4h1v1h-1zM5 4h1v1h-1zM7 4h1v1h-1zM9 4h1v1h-1zM11 4h1v1h-1zM13 4h1v1h-1zM3 7h1v1h-1zM5 7h1v1h-1zM7 7h1v1h-1zM9 7h1v1h-1zM11 7h1v1h-1zM3 8h1v1h-1zM5 8h1v1h-1zM7 8h1v1h-1zM9 8h1v1h-1zM11 8h1v1h-1zM13 8h1v1h-1zM4 9h1v1h-1zM6 9h1v1h-1zM8 9h1v1h-1zM10 9h1v1h-1zM12 9h1v1h-1zM4 10h1v1h-1zM6 10h1v1h-1zM8 10h1v1h-1zM10 10h1v1h-1zM12 10h1v1h-1z"/><path fill="#000" d="M12 5h1v1h-1zM12 6h2v1h-2zM13 7h1v1h-1z"/></svg>
<svg style="left:917px;top:147px" width="13" height="12" viewBox="0 0 13 12"><path fill="#000" d="M0 0h3v1h-3zM0 1h1v1h-1zM3 1h3v1h-3zM0 2h1v1h-1zM7 2h3v1h-3zM0 3h1v1h-1zM9 3h1v1h-1zM0 4h1v1h-1zM9 4h1v1h-1zM0 5h1v1h-1zM9 5h1v1h-1zM0 6h1v1h-1zM9 6h1v1h-1zM0 7h1v1h-1zM9 7h1v1h-1zM0 8h1v1h-1zM9 8h1v1h-1zM0 9h3v1h-3zM9 9h1v1h-1zM3 10h4v1h-4zM9 10h1v1h-1zM7 11h3v1h-3z"/><path fill="#00ffff" d="M1 1h2v1h-2zM3 2h4v1h-4zM7 3h2v1h-2z"/><path fill="#fff" d="M1 2h2v1h-2zM1 3h6v1h-6zM1 4h8v1h-8zM1 5h8v1h-8zM1 6h8v1h-8zM1 7h8v1h-8zM1 8h8v1h-8zM3 9h6v1h-6zM7 10h2v1h-2z"/><path fill="#808080" d="M10 9h3v1h-3zM10 10h2v1h-2zM10 11h1v1h-1z"/></svg>
<svg style="left:0;top:0" width="1" height="1"><path fill="#808080" d="M872 122h1v1h-1zM874 122h1v1h-1zM876 122h1v1h-1zM891 138h1v1h-1zM893 138h1v1h-1zM895 138h1v1h-1zM885 131h1v1h-1zM885 133h1v1h-1zM904 146h1v1h-1zM904 148h1v1h-1zM904 150h1v1h-1zM904 152h1v1h-1zM904 154h1v1h-1zM906 154h1v1h-1zM908 154h1v1h-1zM910 154h1v1h-1zM912 154h1v1h-1zM914 154h1v1h-1z"/></svg>
<div class="a" style="left:2px;top:70px;width:846px;height:581px;overflow:hidden">
<div class="a raised" style="left:42px;top:279px;width:560px;height:400px"></div>
<div class="a" style="left:46px;top:283px;width:552px;height:18px;background:#000080"></div>
<div class="t b" id="ctl" style="left:66px;top:285px;color:#fff;font-size:12px;"><span class="sx" style="transform:scaleX(0.9821)">Project1 - Form1 (Code)</span></div>
<svg style="left:49px;top:286px" width="14" height="13" viewBox="0 0 14 13"><path fill="#000" d="M1 0h1v1h-1zM13 0h1v1h-1zM1 1h1v1h-1zM13 1h1v1h-1zM1 2h1v1h-1zM13 2h1v1h-1zM1 3h1v1h-1zM13 3h1v1h-1zM1 4h1v1h-1zM13 4h1v1h-1zM1 5h1v1h-1zM13 5h1v1h-1zM1 6h1v1h-1zM13 6h1v1h-1zM1 7h1v1h-1zM3 7h1v1h-1zM13 7h1v1h-1zM1 8h1v1h-1zM13 8h1v1h-1zM0 9h1v1h-1zM3 9h1v1h-1zM13 9h1v1h-1zM0 10h2v1h-2zM3 10h1v1h-1zM1 11h3v1h-3zM2 12h1v1h-1z"/><path fill="#008080" d="M2 0h11v1h-11zM2 1h11v1h-11z"/><path fill="#fff" d="M2 2h11v1h-11zM2 3h11v1h-11zM2 4h11v1h-11zM2 5h3v1h-3zM8 5h5v1h-5zM2 6h2v1h-2zM7 6h6v1h-6zM2 7h1v1h-1zM6 7h7v1h-7zM2 8h2v1h-2zM5 8h8v1h-8z"/><path fill="#ff00ff" d="M5 5h2v1h-2zM4 6h2v1h-2zM4 7h1v1h-1z"/><path fill="#800080" d="M7 5h1v1h-1zM6 6h1v1h-1zM5 7h1v1h-1zM4 8h1v1h-1z"/><path fill="#00ffff" d="M1 9h2v1h-2zM2 10h1v1h-1z"/><path fill="#c0c0c0" d="M4 9h3v1h-3zM8 9h5v1h-5z"/><path fill="#ffff00" d="M7 9h1v1h-1zM5 10h2v1h-2z"/><path fill="#808000" d="M6 11h1v1h-1zM6 12h1v1h-1z"/></svg>
<div class="a btn" style="left:546px;top:285px;width:16px;height:14px"></div>
<div class="a btn" style="left:562px;top:285px;width:16px;height:14px"></div>
<div class="a btn" style="left:580px;top:285px;width:16px;height:14px"></div>
<svg style="left:550px;top:294px" width="6" height="2" viewBox="0 0 6 2"><path fill="#000" d="M0 0h6v1h-6zM0 1h6v1h-6z"/></svg>
<svg style="left:565px;top:287px" width="9" height="9" viewBox="0 0 9 9"><path fill="#000" d="M0 0h9v1h-9zM0 1h9v1h-9zM0 2h1v1h-1zM8 2h1v1h-1zM0 3h1v1h-1zM8 3h1v1h-1zM0 4h1v1h-1zM8 4h1v1h-1zM0 5h1v1h-1zM8 5h1v1h-1zM0 6h1v1h-1zM8 6h1v1h-1zM0 7h1v1h-1zM8 7h1v1h-1zM0 8h9v1h-9z"/></svg>
<svg style="left:584px;top:288px" width="8" height="7" viewBox="0 0 8 7"><path fill="#000" d="M0 0h2v1h-2zM6 0h2v1h-2zM1 1h2v1h-2zM5 1h2v1h-2zM2 2h4v1h-4zM3 3h2v1h-2zM2 4h4v1h-4zM1 5h2v1h-2zM5 5h2v1h-2zM0 6h2v1h-2zM6 6h2v1h-2z"/></svg>
<div class="a sunk" style="left:56px;top:304px;width:261px;height:22px;background:#fff"></div>
<div class="a sbtn" style="left:299px;top:306px;width:16px;height:18px"></div>
<svg style="left:303px;top:313px" width="7" height="4" viewBox="0 0 7 4"><path fill="#000" d="M0 0h7v1h-7zM1 1h5v1h-5zM2 2h3v1h-3zM3 3h1v1h-1z"/></svg>
<div class="t b" id="cb1" style="left:60px;top:307px"><span class="sx" style="transform:scaleX(1.0283)">Command1</span></div>
<div class="a sunk" style="left:327px;top:304px;width:260px;height:22px;background:#fff"></div>
<div class="a sbtn" style="left:569px;top:306px;width:16px;height:18px"></div>
<svg style="left:573px;top:313px" width="7" height="4" viewBox="0 0 7 4"><path fill="#000" d="M0 0h7v1h-7zM1 1h5v1h-5zM2 2h3v1h-3zM3 3h1v1h-1z"/></svg>
<div class="t b" id="cb2" style="left:331px;top:307px"><span class="sx" style="transform:scaleX(0.9773)">Click</span></div>
<div class="a sunk" style="left:46px;top:328px;width:552px;height:300px;background:#fff"></div>
<div class="a" style="left:48px;top:330px;width:20px;height:300px;background:#c0c0c0"></div>
<div class="a" style="left:68px;top:330px;width:1px;height:300px;background:#000"></div>
<div class="a" style="left:69px;top:347px;width:511px;height:1px;background:#808080"></div>
<div class="a" style="left:69px;top:443px;width:511px;height:1px;background:#808080"></div>
<div class="a" style="left:112px;top:364px;width:184px;height:16px;background:#ffff00"></div>
<svg style="left:55px;top:367px" width="11" height="11" viewBox="0 0 11 11"><path fill="#000" d="M5 0h1v1h-1zM5 1h2v1h-2zM5 2h1v1h-1zM7 2h1v1h-1zM0 3h6v1h-6zM8 3h1v1h-1zM0 4h1v1h-1zM9 4h1v1h-1zM0 5h1v1h-1zM10 5h1v1h-1zM0 6h1v1h-1zM9 6h1v1h-1zM0 7h6v1h-6zM8 7h1v1h-1zM5 8h1v1h-1zM7 8h1v1h-1zM5 9h2v1h-2zM5 10h1v1h-1z"/><path fill="#ffff00" d="M6 2h1v1h-1zM6 3h2v1h-2zM1 4h8v1h-8zM1 5h9v1h-9zM1 6h8v1h-8zM6 7h2v1h-2zM6 8h1v1h-1z"/></svg>
<div class="code" id="code" style="left:80px;top:333px"><span class="k">Dim</span> sval, srub, kurs <span class="k">As Double</span>
<span class="k">Private Sub</span> Command1_Click()
    srub = Val(TetxtR.Text)
    kurs = Val(TextK.Text)
    sval = srub / kurs
    TextV.Text = Str(sval)
<span class="k">End Sub</span>

<span class="k">Private Sub</span> Command2_Click()
    <span class="k">End</span>
<span class="k">End Sub</span></div>
<div class="a dith" style="left:580px;top:330px;width:16px;height:300px"></div>
<div class="a sbtn" style="left:580px;top:330px;width:16px;height:6px"></div>
<div class="a sbtn" style="left:580px;top:336px;width:16px;height:17px"></div>
<svg style="left:584px;top:342px" width="7" height="4" viewBox="0 0 7 4"><path fill="#000" d="M3 0h1v1h-1zM2 1h3v1h-3zM1 2h5v1h-5zM0 3h7v1h-7z"/></svg>
<div class="a sbtn" style="left:580px;top:353px;width:16px;height:300px"></div>
</div>
<div class="a" style="left:0;top:659px;width:849px;height:15px;background:#808080"></div>
<div class="t b" id="imt" style="left:2px;top:659px;color:#c0c0c0;font-size:12px"><span class="sx" style="transform:scaleX(0.9518)">Immediate</span></div>
<div class="a btn" style="left:836px;top:660px;width:12px;height:13px"></div>
<svg style="left:838px;top:662px" width="8" height="7" viewBox="0 0 8 7"><path fill="#000" d="M0 0h2v1h-2zM6 0h2v1h-2zM1 1h2v1h-2zM5 1h2v1h-2zM2 2h4v1h-4zM3 3h2v1h-2zM2 4h4v1h-4zM1 5h2v1h-2zM5 5h2v1h-2zM0 6h2v1h-2zM6 6h2v1h-2z"/></svg>
<div class="a sunk" style="left:0;top:675px;width:850px;height:65px;background:#fff"></div>
<div class="a dith" style="left:2px;top:722px;width:831px;height:16px"></div>
<div class="a sbtn" style="left:2px;top:722px;width:16px;height:16px"></div>
<svg style="left:7px;top:726px" width="4" height="7" viewBox="0 0 4 7"><path fill="#000" d="M3 0h1v1h-1zM2 1h2v1h-2zM1 2h3v1h-3zM0 3h4v1h-4zM1 4h3v1h-3zM2 5h2v1h-2zM3 6h1v1h-1z"/></svg>
<div class="a sbtn" style="left:18px;top:722px;width:80px;height:16px"></div>
<div class="a sbtn" style="left:817px;top:722px;width:16px;height:16px"></div>
<svg style="left:823px;top:726px" width="4" height="7" viewBox="0 0 4 7"><path fill="#000" d="M0 0h1v1h-1zM0 1h2v1h-2zM0 2h3v1h-3zM0 3h4v1h-4zM0 4h3v1h-3zM0 5h2v1h-2zM0 6h1v1h-1z"/></svg>
<div class="a" style="left:833px;top:723px;width:15px;height:15px;background:#c0c0c0"></div>
<div class="a sbtn" style="left:832px;top:677px;width:16px;height:16px"></div>
<svg style="left:836px;top:683px" width="7" height="4" viewBox="0 0 7 4"><path fill="#000" d="M3 0h1v1h-1zM2 1h3v1h-3zM1 2h5v1h-5zM0 3h7v1h-7z"/></svg>
<div class="a sbtn" style="left:832px;top:693px;width:16px;height:14px"></div>
<div class="a sbtn" style="left:832px;top:707px;width:16px;height:16px"></div>
<svg style="left:836px;top:713px" width="7" height="4" viewBox="0 0 7 4"><path fill="#000" d="M0 0h7v1h-7zM1 1h5v1h-5zM2 2h3v1h-3zM3 3h1v1h-1z"/></svg>
<div class="a" style="left:0;top:740px;width:1024px;height:28px;background:#c0c0c0"></div>
<div class="a" style="left:0;top:741px;width:1024px;height:1px;background:#fff"></div>
<div class="a btn" style="left:2px;top:744px;width:56px;height:22px"></div>
<svg style="left:6px;top:748px" width="16" height="14" viewBox="0 0 16 14"><path fill="#000" d="M9 0h4v1h-4zM7 1h7v1h-7zM0 2h1v1h-1zM6 2h3v1h-3zM10 2h2v1h-2zM13 2h3v1h-3zM0 3h1v1h-1zM2 3h6v1h-6zM10 3h2v1h-2zM14 3h2v1h-2zM2 4h1v1h-1zM4 4h1v1h-1zM6 4h2v1h-2zM10 4h2v1h-2zM14 4h2v1h-2zM6 5h2v1h-2zM9 5h4v1h-4zM14 5h2v1h-2zM6 6h10v1h-10zM6 7h3v1h-3zM10 7h2v1h-2zM13 7h3v1h-3zM6 8h2v1h-2zM10 8h2v1h-2zM14 8h2v1h-2zM6 9h2v1h-2zM10 9h2v1h-2zM14 9h2v1h-2zM6 10h2v1h-2zM9 10h4v1h-4zM14 10h2v1h-2zM0 11h1v1h-1zM6 11h3v1h-3zM13 11h3v1h-3zM0 12h1v1h-1zM2 12h5v1h-5zM14 12h2v1h-2zM2 13h4v1h-4zM15 13h1v1h-1z"/><path fill="#ff0000" d="M9 2h1v1h-1zM8 3h2v1h-2zM8 4h2v1h-2zM0 5h1v1h-1zM8 5h1v1h-1zM0 6h1v1h-1zM2 6h4v1h-4zM2 7h4v1h-4z"/><path fill="#00ff00" d="M12 2h1v1h-1zM12 3h2v1h-2zM12 4h2v1h-2zM13 5h1v1h-1z"/><path fill="#0000ff" d="M9 7h1v1h-1zM0 8h1v1h-1zM8 8h2v1h-2zM0 9h1v1h-1zM2 9h4v1h-4zM8 9h2v1h-2zM2 10h4v1h-4zM8 10h1v1h-1z"/><path fill="#ffff00" d="M12 7h1v1h-1zM12 8h2v1h-2zM12 9h2v1h-2zM13 10h1v1h-1z"/></svg>
<div class="t b" id="start" style="left:25px;top:748px;font-size:12px"><span class="sx" style="transform:scaleX(0.9932)">Пуск</span></div>
<div class="sep" style="left:60px;top:744px;height:22px"></div>
<div class="a thin-r" style="left:65px;top:746px;width:3px;height:18px"></div>
<svg style="left:74px;top:747px" width="16" height="16" viewBox="0 0 16 16"><path fill="#0055ee" d="M11 0h4v1h-4zM6 1h6v1h-6zM15 1h1v1h-1zM4 2h6v1h-6zM12 2h2v1h-2zM15 2h1v1h-1zM3 3h3v1h-3zM7 3h3v1h-3zM13 3h2v1h-2zM2 4h2v1h-2zM5 4h2v1h-2zM14 4h1v1h-1zM2 5h1v1h-1zM4 5h4v1h-4zM14 5h1v1h-1zM1 6h1v1h-1zM4 6h3v1h-3zM11 6h1v1h-1zM14 6h2v1h-2zM2 7h14v1h-14zM3 8h13v1h-13zM2 9h5v1h-5zM1 10h6v1h-6zM12 10h4v1h-4zM1 11h1v1h-1zM4 11h4v1h-4zM10 11h6v1h-6zM1 12h1v1h-1zM5 12h10v1h-10zM1 13h1v1h-1zM7 13h7v1h-7zM1 14h2v1h-2zM9 14h3v1h-3zM2 15h3v1h-3z"/><path fill="#33ccff" d="M10 2h2v1h-2zM10 3h3v1h-3zM10 4h4v1h-4zM12 5h2v1h-2zM12 6h2v1h-2z"/><path fill="#fff" d="M6 3h1v1h-1z"/><path fill="#ffff00" d="M4 4h1v1h-1z"/><path fill="#3300cc" d="M7 4h3v1h-3zM10 5h2v1h-2zM11 10h1v1h-1z"/><path fill="#ffaa33" d="M3 5h1v1h-1zM3 6h1v1h-1zM2 8h1v1h-1zM1 9h1v1h-1z"/><path fill="#808080" d="M0 8h1v1h-1zM0 9h1v1h-1zM0 10h1v1h-1zM0 11h1v1h-1zM0 12h1v1h-1z"/><path fill="#000" d="M3 11h1v1h-1zM4 12h1v1h-1zM5 13h2v1h-2zM6 14h2v1h-2z"/><path fill="#000080" d="M8 14h1v1h-1z"/></svg>
<svg style="left:97px;top:747px" width="16" height="16" viewBox="0 0 16 16"><path fill="#ff0000" d="M12 0h2v1h-2zM12 1h2v1h-2z"/><path fill="#ffaa00" d="M11 1h1v1h-1zM10 2h2v1h-2zM9 3h2v1h-2zM8 4h2v1h-2zM7 5h2v1h-2zM7 6h1v1h-1zM7 7h1v1h-1z"/><path fill="#1188cc" d="M0 2h5v1h-5zM13 2h2v1h-2zM0 3h4v1h-4zM12 3h3v1h-3zM0 4h3v1h-3zM12 4h3v1h-3zM0 5h2v1h-2zM13 5h2v1h-2zM0 6h1v1h-1zM14 6h1v1h-1zM0 10h1v1h-1zM14 10h1v1h-1zM0 11h2v1h-2zM13 11h2v1h-2zM0 12h3v1h-3zM12 12h3v1h-3zM0 13h4v1h-4zM11 13h4v1h-4zM0 14h5v1h-5zM10 14h5v1h-5z"/><path fill="#f0ecc0" d="M5 2h5v1h-5zM4 3h1v1h-1zM3 4h1v1h-1zM11 4h1v1h-1zM2 5h1v1h-1zM10 5h3v1h-3zM1 6h1v1h-1zM9 6h5v1h-5zM0 7h2v1h-2zM10 7h5v1h-5zM0 8h2v1h-2zM11 8h4v1h-4zM0 9h2v1h-2zM11 9h4v1h-4zM1 10h2v1h-2zM10 10h4v1h-4zM2 11h2v1h-2zM8 11h5v1h-5zM3 12h2v1h-2zM7 12h5v1h-5zM4 13h7v1h-7zM5 14h5v1h-5z"/><path fill="#000" d="M12 2h1v1h-1zM15 2h1v1h-1zM11 3h1v1h-1zM15 3h1v1h-1zM10 4h1v1h-1zM15 4h1v1h-1zM9 5h1v1h-1zM15 5h1v1h-1zM6 6h1v1h-1zM8 6h1v1h-1zM15 6h1v1h-1zM5 7h1v1h-1zM8 7h2v1h-2zM15 7h1v1h-1zM4 8h1v1h-1zM8 8h1v1h-1zM10 8h1v1h-1zM15 8h1v1h-1zM3 9h1v1h-1zM10 9h1v1h-1zM15 9h1v1h-1zM3 10h1v1h-1zM8 10h2v1h-2zM15 10h1v1h-1zM4 11h1v1h-1zM7 11h1v1h-1zM15 11h1v1h-1zM5 12h2v1h-2zM15 12h1v1h-1zM15 13h1v1h-1zM15 14h1v1h-1zM0 15h16v1h-16z"/><path fill="#fff" d="M5 3h4v1h-4zM4 4h4v1h-4zM3 5h4v1h-4zM2 6h4v1h-4zM2 7h3v1h-3zM6 7h1v1h-1zM2 8h2v1h-2zM5 8h3v1h-3zM9 8h1v1h-1zM2 9h1v1h-1zM4 9h6v1h-6zM4 10h4v1h-4zM5 11h2v1h-2z"/></svg>
<svg style="left:120px;top:747px" width="16" height="16" viewBox="0 0 16 16"><path fill="#000" d="M7 0h2v1h-2zM13 0h1v1h-1zM6 1h1v1h-1zM9 1h1v1h-1zM11 1h2v1h-2zM14 1h1v1h-1zM5 2h1v1h-1zM10 2h1v1h-1zM14 2h1v1h-1zM4 3h1v1h-1zM13 3h1v1h-1zM3 4h1v1h-1zM13 4h1v1h-1zM2 5h1v1h-1zM12 5h1v1h-1zM14 5h1v1h-1zM1 6h1v1h-1zM14 6h1v1h-1zM0 7h1v1h-1zM15 7h1v1h-1zM0 8h1v1h-1zM14 8h1v1h-1zM1 9h1v1h-1zM13 9h1v1h-1zM2 10h1v1h-1zM12 10h1v1h-1zM2 11h1v1h-1zM12 11h1v1h-1zM1 12h1v1h-1zM11 12h1v1h-1zM1 13h1v1h-1zM5 13h2v1h-2zM10 13h1v1h-1zM3 14h1v1h-1zM7 14h1v1h-1zM9 14h1v1h-1zM1 15h1v1h-1zM8 15h1v1h-1z"/><path fill="#ff0000" d="M14 0h1v1h-1z"/><path fill="#fff" d="M7 1h2v1h-2zM6 2h4v1h-4zM5 3h5v1h-5zM4 4h5v1h-5zM3 5h5v1h-5zM13 5h1v1h-1zM2 6h2v1h-2zM12 6h2v1h-2zM1 7h3v1h-3zM13 7h2v1h-2zM1 8h3v1h-3zM6 8h1v1h-1zM12 8h2v1h-2zM2 9h4v1h-4zM11 9h2v1h-2zM3 10h2v1h-2zM10 10h2v1h-2zM3 11h1v1h-1zM9 11h3v1h-3zM7 12h4v1h-4zM7 13h3v1h-3zM8 14h1v1h-1z"/><path fill="#ffaa00" d="M13 1h1v1h-1zM11 2h3v1h-3zM10 3h3v1h-3zM9 4h4v1h-4zM8 5h4v1h-4zM4 6h8v1h-8zM4 7h9v1h-9zM4 8h2v1h-2zM7 8h5v1h-5zM6 9h5v1h-5zM5 10h5v1h-5zM4 11h5v1h-5zM2 12h5v1h-5zM2 13h3v1h-3zM1 14h2v1h-2z"/></svg>
<svg style="left:143px;top:747px" width="16" height="16" viewBox="0 0 16 16"><path fill="#00ffff" d="M0 0h16v1h-16zM0 1h1v1h-1zM8 1h1v1h-1zM15 1h1v1h-1zM0 2h1v1h-1zM8 2h1v1h-1zM15 2h1v1h-1zM0 3h1v1h-1zM8 3h1v1h-1zM15 3h1v1h-1zM0 4h1v1h-1zM2 4h4v1h-4zM8 4h1v1h-1zM10 4h4v1h-4zM15 4h1v1h-1zM0 5h1v1h-1zM8 5h1v1h-1zM15 5h1v1h-1zM0 6h1v1h-1zM2 6h4v1h-4zM8 6h1v1h-1zM10 6h4v1h-4zM15 6h1v1h-1zM0 7h1v1h-1zM8 7h1v1h-1zM15 7h1v1h-1zM0 8h1v1h-1zM2 8h4v1h-4zM8 8h1v1h-1zM15 8h1v1h-1zM0 9h1v1h-1zM8 9h1v1h-1zM15 9h1v1h-1zM0 10h1v1h-1zM8 10h1v1h-1zM15 10h1v1h-1zM0 11h1v1h-1zM8 11h1v1h-1zM15 11h1v1h-1zM0 12h1v1h-1zM8 12h1v1h-1zM15 12h1v1h-1zM0 13h1v1h-1zM8 13h1v1h-1zM15 13h1v1h-1zM0 15h1v1h-1zM2 15h1v1h-1zM4 15h1v1h-1zM6 15h1v1h-1zM8 15h1v1h-1zM10 15h1v1h-1zM12 15h1v1h-1zM14 15h1v1h-1z"/><path fill="#0000ff" d="M1 1h7v1h-7zM9 1h6v1h-6zM1 2h1v1h-1zM6 2h2v1h-2zM9 2h1v1h-1zM14 2h1v1h-1zM1 3h7v1h-7zM9 3h6v1h-6zM1 4h1v1h-1zM6 4h2v1h-2zM9 4h1v1h-1zM14 4h1v1h-1zM1 5h7v1h-7zM9 5h6v1h-6zM1 6h1v1h-1zM6 6h2v1h-2zM9 6h1v1h-1zM14 6h1v1h-1zM1 7h7v1h-7zM9 7h6v1h-6zM1 8h1v1h-1zM6 8h2v1h-2zM9 8h6v1h-6zM1 9h7v1h-7zM9 9h6v1h-6zM1 10h7v1h-7zM9 10h6v1h-6zM1 11h7v1h-7zM9 11h6v1h-6zM1 12h7v1h-7zM9 12h6v1h-6zM1 13h7v1h-7zM9 13h6v1h-6z"/><path fill="#ffff00" d="M2 2h4v1h-4zM10 2h4v1h-4z"/><path fill="#000" d="M0 14h16v1h-16z"/></svg>
<svg style="left:166px;top:749px" width="15" height="11" viewBox="0 0 15 11"><path fill="#ff0000" d="M12 0h1v1h-1zM11 1h2v1h-2zM10 2h2v1h-2zM9 3h4v1h-4zM8 4h4v1h-4zM8 5h5v1h-5zM9 6h5v1h-5zM10 7h3v1h-3z"/><path fill="#ff00ff" d="M1 1h1v1h-1zM0 2h3v1h-3zM0 3h4v1h-4zM1 4h5v1h-5zM1 5h5v1h-5zM7 5h1v1h-1zM2 6h4v1h-4zM1 7h4v1h-4zM1 8h3v1h-3zM1 9h2v1h-2zM2 10h1v1h-1z"/><path fill="#cc0066" d="M12 2h1v1h-1zM7 4h1v1h-1zM7 6h2v1h-2zM7 7h1v1h-1zM13 7h1v1h-1zM11 8h1v1h-1z"/><path fill="#800080" d="M6 5h1v1h-1zM6 6h1v1h-1z"/></svg>
<svg style="left:189px;top:747px" width="16" height="16" viewBox="0 0 16 16"><path fill="#000" d="M0 0h15v1h-15zM0 1h1v1h-1zM3 1h2v1h-2zM8 1h1v1h-1zM10 1h1v1h-1zM14 1h2v1h-2zM0 2h1v1h-1zM3 2h2v1h-2zM8 2h1v1h-1zM10 2h1v1h-1zM14 2h2v1h-2zM0 3h1v1h-1zM3 3h2v1h-2zM8 3h3v1h-3zM14 3h2v1h-2zM0 4h1v1h-1zM3 4h7v1h-7zM14 4h2v1h-2zM0 5h1v1h-1zM14 5h2v1h-2zM0 6h1v1h-1zM14 6h2v1h-2zM0 7h1v1h-1zM14 7h2v1h-2zM0 8h1v1h-1zM14 8h2v1h-2zM0 9h1v1h-1zM14 9h2v1h-2zM0 10h1v1h-1zM14 10h2v1h-2zM0 11h1v1h-1zM14 11h2v1h-2zM0 12h1v1h-1zM15 12h1v1h-1zM0 13h1v1h-1zM14 13h2v1h-2zM0 14h16v1h-16zM1 15h15v1h-15z"/><path fill="#0000ff" d="M1 1h2v1h-2zM5 1h3v1h-3zM9 1h1v1h-1zM11 1h3v1h-3zM1 2h2v1h-2zM5 2h3v1h-3zM9 2h1v1h-1zM11 2h3v1h-3zM1 3h2v1h-2zM5 3h3v1h-3zM11 3h3v1h-3zM1 4h2v1h-2zM10 4h4v1h-4zM1 5h13v1h-13zM1 6h13v1h-13zM1 7h1v1h-1zM13 7h1v1h-1zM1 8h1v1h-1zM13 8h1v1h-1zM1 9h1v1h-1zM13 9h1v1h-1zM1 10h1v1h-1zM13 10h1v1h-1zM1 11h1v1h-1zM13 11h1v1h-1zM1 12h1v1h-1zM13 12h1v1h-1zM1 13h1v1h-1zM13 13h1v1h-1z"/><path fill="#fff" d="M2 7h11v1h-11zM2 9h11v1h-11zM2 11h11v1h-11zM14 12h1v1h-1zM2 13h11v1h-11z"/><path fill="#ff0000" d="M2 8h11v1h-11zM2 10h11v1h-11zM2 12h11v1h-11z"/></svg>
<svg style="left:212px;top:747px" width="16" height="15" viewBox="0 0 16 15"><path fill="#400040" d="M1 0h1v1h-1zM12 0h4v1h-4zM0 1h1v1h-1zM15 1h1v1h-1zM0 2h1v1h-1zM0 3h1v1h-1zM15 3h1v1h-1zM1 4h1v1h-1zM12 4h4v1h-4z"/><path fill="#ee00ee" d="M2 0h10v1h-10zM1 1h1v1h-1zM3 1h9v1h-9zM1 2h1v1h-1zM3 2h9v1h-9zM1 3h1v1h-1zM3 3h9v1h-9z"/><path fill="#ffff00" d="M2 1h1v1h-1zM2 2h1v1h-1zM2 3h1v1h-1zM2 6h1v1h-1zM2 7h1v1h-1zM2 8h1v1h-1zM2 11h1v1h-1zM2 12h1v1h-1zM2 13h1v1h-1z"/><path fill="#fff" d="M12 1h3v1h-3zM12 2h3v1h-3zM12 3h3v1h-3zM12 6h3v1h-3zM12 7h3v1h-3zM12 8h3v1h-3zM12 11h3v1h-3zM12 12h3v1h-3zM12 13h3v1h-3z"/><path fill="#800080" d="M2 4h10v1h-10z"/><path fill="#000060" d="M1 5h1v1h-1zM12 5h4v1h-4zM0 6h1v1h-1zM15 6h1v1h-1zM0 7h1v1h-1zM0 8h1v1h-1zM15 8h1v1h-1zM1 9h1v1h-1zM12 9h4v1h-4z"/><path fill="#0000ff" d="M2 5h10v1h-10zM1 6h1v1h-1zM3 6h9v1h-9zM1 7h1v1h-1zM3 7h9v1h-9zM1 8h1v1h-1zM3 8h9v1h-9z"/><path fill="#000080" d="M2 9h10v1h-10z"/><path fill="#004000" d="M1 10h1v1h-1zM12 10h4v1h-4zM0 11h1v1h-1zM15 11h1v1h-1zM0 12h1v1h-1zM0 13h1v1h-1zM15 13h1v1h-1zM1 14h1v1h-1zM12 14h4v1h-4z"/><path fill="#00a000" d="M2 10h10v1h-10zM1 11h1v1h-1zM3 11h9v1h-9zM1 12h1v1h-1zM3 12h9v1h-9zM1 13h1v1h-1zM3 13h9v1h-9zM2 14h10v1h-10z"/></svg>
<svg style="left:235px;top:747px" width="16" height="15" viewBox="0 0 16 15"><path fill="#000" d="M3 0h1v1h-1zM15 0h1v1h-1zM2 1h1v1h-1zM4 1h1v1h-1zM14 1h1v1h-1zM1 2h1v1h-1zM5 2h1v1h-1zM14 2h1v1h-1zM0 3h1v1h-1zM6 3h7v1h-7zM14 3h1v1h-1zM0 4h1v1h-1zM6 4h1v1h-1zM12 4h2v1h-2zM0 5h1v1h-1zM6 5h1v1h-1zM8 5h3v1h-3zM12 5h1v1h-1zM0 6h1v1h-1zM6 6h1v1h-1zM8 6h1v1h-1zM11 6h3v1h-3zM0 7h1v1h-1zM6 7h1v1h-1zM8 7h2v1h-2zM11 7h1v1h-1zM13 7h2v1h-2zM0 8h1v1h-1zM6 8h1v1h-1zM8 8h1v1h-1zM11 8h5v1h-5zM0 9h1v1h-1zM6 9h1v1h-1zM8 9h4v1h-4zM13 9h3v1h-3zM0 10h1v1h-1zM6 10h1v1h-1zM10 10h2v1h-2zM14 10h2v1h-2zM1 11h1v1h-1zM6 11h5v1h-5zM12 11h4v1h-4zM2 12h1v1h-1zM5 12h1v1h-1zM9 12h6v1h-6zM3 13h2v1h-2zM10 13h4v1h-4zM11 14h2v1h-2z"/><path fill="#ffff00" d="M3 1h1v1h-1zM2 2h3v1h-3zM1 3h5v1h-5zM1 4h1v1h-1zM3 4h1v1h-1zM5 4h1v1h-1zM7 4h5v1h-5zM1 5h5v1h-5zM7 5h1v1h-1zM11 5h1v1h-1zM1 6h1v1h-1zM3 6h1v1h-1zM5 6h1v1h-1zM7 6h1v1h-1zM9 6h2v1h-2zM1 7h5v1h-5zM7 7h1v1h-1zM10 7h1v1h-1zM1 8h1v1h-1zM3 8h1v1h-1zM5 8h1v1h-1zM7 8h1v1h-1zM9 8h2v1h-2zM1 9h5v1h-5zM7 9h1v1h-1zM1 10h1v1h-1zM3 10h1v1h-1zM5 10h1v1h-1zM7 10h3v1h-3zM2 11h4v1h-4zM3 12h2v1h-2z"/><path fill="#c0c000" d="M2 4h1v1h-1zM4 4h1v1h-1zM2 6h1v1h-1zM4 6h1v1h-1zM2 8h1v1h-1zM4 8h1v1h-1zM2 10h1v1h-1zM4 10h1v1h-1z"/><path fill="#00ff00" d="M12 7h1v1h-1z"/><path fill="#c0c0c0" d="M12 9h1v1h-1zM12 10h2v1h-2zM11 11h1v1h-1z"/></svg>
<svg style="left:269px;top:749px" width="8" height="5" viewBox="0 0 8 5"><path fill="#000" d="M0 0h1v1h-1zM3 0h1v1h-1zM1 1h1v1h-1zM4 1h1v1h-1zM2 2h1v1h-1zM5 2h1v1h-1zM1 3h1v1h-1zM4 3h1v1h-1zM0 4h1v1h-1zM3 4h1v1h-1z"/></svg>
<div class="sep" style="left:279px;top:744px;height:22px"></div>
<div class="a thin-r" style="left:283px;top:746px;width:3px;height:18px"></div>
<div class="a btn" style="left:290px;top:744px;width:81px;height:22px"></div>
<div class="t ns" id="tk0" style="left:313px;top:748px;font-size:12px"><span class="sx" style="transform:scaleX(0.8546)">Microsoft ...</span></div>
<svg style="left:294px;top:750px" width="16" height="12" viewBox="0 0 16 12"><path fill="#000" d="M0 0h16v1h-16zM5 1h1v1h-1zM10 1h1v1h-1zM15 1h1v1h-1zM5 2h1v1h-1zM10 2h1v1h-1zM14 2h1v1h-1zM5 3h1v1h-1zM10 3h1v1h-1zM14 3h1v1h-1zM5 4h1v1h-1zM10 4h1v1h-1zM13 4h1v1h-1zM5 5h1v1h-1zM10 5h1v1h-1zM13 5h1v1h-1zM12 6h1v1h-1zM6 7h1v1h-1zM11 7h1v1h-1zM6 8h1v1h-1zM11 8h1v1h-1zM6 9h1v1h-1zM11 9h1v1h-1zM6 10h1v1h-1zM10 10h1v1h-1zM4 11h3v1h-3zM8 11h3v1h-3z"/><path fill="#00ffff" d="M1 1h4v1h-4zM7 1h3v1h-3zM12 1h3v1h-3zM1 2h4v1h-4zM7 2h3v1h-3zM12 2h2v1h-2zM2 3h3v1h-3zM7 3h3v1h-3zM12 3h2v1h-2zM2 4h3v1h-3zM6 4h4v1h-4zM11 4h2v1h-2zM2 5h3v1h-3zM6 5h4v1h-4zM11 5h2v1h-2zM3 6h9v1h-9zM3 7h3v1h-3zM7 7h4v1h-4zM3 8h3v1h-3zM7 8h4v1h-4zM4 9h2v1h-2zM8 9h3v1h-3zM4 10h2v1h-2zM8 10h2v1h-2z"/></svg>
<div class="a btn" style="left:374px;top:744px;width:81px;height:22px"></div>
<div class="t ns" id="tk1" style="left:396px;top:748px;font-size:12px"><span class="sx" style="transform:scaleX(0.9332)">C:\WIND...</span></div>
<svg style="left:378px;top:748px" width="16" height="13" viewBox="0 0 16 13"><path fill="#808000" d="M3 0h5v1h-5zM2 1h1v1h-1zM8 1h1v1h-1zM1 2h1v1h-1zM9 2h6v1h-6zM1 3h1v1h-1zM13 3h1v1h-1zM0 4h10v1h-10zM13 4h1v1h-1zM0 5h1v1h-1zM10 5h1v1h-1zM13 5h1v1h-1zM0 6h1v1h-1zM13 6h1v1h-1zM1 7h1v1h-1zM13 7h1v1h-1zM1 8h1v1h-1zM13 8h1v1h-1zM1 9h1v1h-1zM13 9h1v1h-1zM2 10h1v1h-1zM13 10h1v1h-1zM2 11h12v1h-12z"/><path fill="#fff" d="M3 1h5v1h-5zM2 2h2v1h-2zM2 3h1v1h-1zM9 3h4v1h-4zM1 5h9v1h-9zM1 6h1v1h-1zM2 7h1v1h-1zM2 8h1v1h-1zM2 9h1v1h-1zM3 10h1v1h-1z"/><path fill="#ffff99" d="M4 2h5v1h-5zM3 3h6v1h-6zM10 4h3v1h-3zM11 5h2v1h-2zM2 6h8v1h-8zM12 6h1v1h-1zM3 7h5v1h-5zM9 7h2v1h-2zM3 8h3v1h-3zM7 8h1v1h-1zM9 8h1v1h-1zM11 8h1v1h-1zM3 9h2v1h-2zM6 9h1v1h-1zM8 9h1v1h-1zM10 9h1v1h-1zM12 9h1v1h-1zM4 10h1v1h-1zM6 10h1v1h-1zM12 10h1v1h-1z"/><path fill="#000" d="M14 3h1v1h-1zM14 4h1v1h-1zM14 5h1v1h-1zM10 6h2v1h-2zM14 6h1v1h-1zM11 7h2v1h-2zM14 7h1v1h-1zM12 8h1v1h-1zM14 8h1v1h-1zM14 9h1v1h-1zM14 10h1v1h-1zM14 11h1v1h-1zM3 12h12v1h-12z"/><path fill="#ffc0a0" d="M8 7h1v1h-1zM6 8h1v1h-1zM8 8h1v1h-1zM10 8h1v1h-1zM5 9h1v1h-1zM7 9h1v1h-1zM9 9h1v1h-1zM11 9h1v1h-1zM5 10h1v1h-1zM7 10h5v1h-5z"/></svg>
<div class="a btn" style="left:458px;top:744px;width:81px;height:22px"></div>
<div class="t ns" id="tk2" style="left:480px;top:748px;font-size:12px"><span class="sx" style="transform:scaleX(0.9157)">D:\Мои д...</span></div>
<svg style="left:462px;top:748px" width="16" height="13" viewBox="0 0 16 13"><path fill="#808000" d="M3 0h5v1h-5zM2 1h1v1h-1zM8 1h1v1h-1zM1 2h1v1h-1zM9 2h6v1h-6zM1 3h1v1h-1zM13 3h1v1h-1zM0 4h10v1h-10zM13 4h1v1h-1zM0 5h1v1h-1zM10 5h1v1h-1zM13 5h1v1h-1zM0 6h1v1h-1zM13 6h1v1h-1zM1 7h1v1h-1zM13 7h1v1h-1zM1 8h1v1h-1zM13 8h1v1h-1zM1 9h1v1h-1zM13 9h1v1h-1zM2 10h1v1h-1zM13 10h1v1h-1zM2 11h12v1h-12z"/><path fill="#fff" d="M3 1h5v1h-5zM2 2h2v1h-2zM2 3h1v1h-1zM9 3h4v1h-4zM1 5h9v1h-9zM1 6h1v1h-1zM2 7h1v1h-1zM2 8h1v1h-1zM2 9h1v1h-1zM3 10h1v1h-1z"/><path fill="#ffff99" d="M4 2h5v1h-5zM3 3h6v1h-6zM10 4h3v1h-3zM11 5h2v1h-2zM2 6h8v1h-8zM12 6h1v1h-1zM3 7h5v1h-5zM9 7h2v1h-2zM3 8h3v1h-3zM7 8h1v1h-1zM9 8h1v1h-1zM11 8h1v1h-1zM3 9h2v1h-2zM6 9h1v1h-1zM8 9h1v1h-1zM10 9h1v1h-1zM12 9h1v1h-1zM4 10h1v1h-1zM6 10h1v1h-1zM12 10h1v1h-1z"/><path fill="#000" d="M14 3h1v1h-1zM14 4h1v1h-1zM14 5h1v1h-1zM10 6h2v1h-2zM14 6h1v1h-1zM11 7h2v1h-2zM14 7h1v1h-1zM12 8h1v1h-1zM14 8h1v1h-1zM14 9h1v1h-1zM14 10h1v1h-1zM14 11h1v1h-1zM3 12h12v1h-12z"/><path fill="#ffc0a0" d="M8 7h1v1h-1zM6 8h1v1h-1zM8 8h1v1h-1zM10 8h1v1h-1zM5 9h1v1h-1zM7 9h1v1h-1zM9 9h1v1h-1zM11 9h1v1h-1zM5 10h1v1h-1zM7 10h5v1h-5z"/></svg>
<div class="a btn" style="left:542px;top:744px;width:81px;height:22px"></div>
<div class="t ns" id="tk3" style="left:565px;top:748px;font-size:12px"><span class="sx" style="transform:scaleX(0.8696)">Project1 - ...</span></div>
<svg style="left:546px;top:747px" width="16" height="16" viewBox="0 0 16 16"><path fill="#000" d="M4 0h1v1h-1zM3 1h1v1h-1zM5 1h1v1h-1zM4 2h1v1h-1zM6 2h1v1h-1zM5 3h1v1h-1zM1 4h1v1h-1zM5 4h1v1h-1zM0 5h1v1h-1zM2 5h1v1h-1zM4 5h2v1h-2zM1 6h1v1h-1zM3 6h1v1h-1zM6 6h3v1h-3zM2 7h4v1h-4zM9 7h4v1h-4zM2 8h1v1h-1zM6 8h3v1h-3zM12 8h1v1h-1zM2 9h1v1h-1zM6 9h1v1h-1zM12 9h1v1h-1zM2 10h1v1h-1zM7 10h1v1h-1zM12 10h1v1h-1zM2 11h1v1h-1zM6 11h1v1h-1zM12 11h1v1h-1zM2 12h1v1h-1zM7 12h2v1h-2zM12 12h1v1h-1zM2 13h3v1h-3zM6 13h2v1h-2zM12 13h1v1h-1zM5 14h4v1h-4zM12 14h1v1h-1zM8 15h5v1h-5z"/><path fill="#008000" d="M4 1h1v1h-1zM5 2h1v1h-1z"/><path fill="#ffff00" d="M1 5h1v1h-1zM2 6h1v1h-1z"/><path fill="#00ffff" d="M4 6h2v1h-2zM6 7h3v1h-3zM9 8h3v1h-3z"/><path fill="#fff" d="M3 8h3v1h-3zM3 9h1v1h-1zM5 9h1v1h-1zM7 9h5v1h-5zM3 10h3v1h-3zM8 10h1v1h-1zM10 10h2v1h-2zM3 11h1v1h-1zM5 11h1v1h-1zM7 11h3v1h-3zM11 11h1v1h-1zM3 12h3v1h-3zM9 12h1v1h-1zM11 12h1v1h-1zM8 13h4v1h-4zM9 14h3v1h-3z"/><path fill="#808080" d="M4 9h1v1h-1zM6 10h1v1h-1zM9 10h1v1h-1zM4 11h1v1h-1zM10 11h1v1h-1zM10 12h1v1h-1zM13 12h3v1h-3zM13 13h2v1h-2zM13 14h1v1h-1z"/><path fill="#ff0000" d="M6 12h1v1h-1zM5 13h1v1h-1z"/></svg>
<div class="a btn" style="left:626px;top:744px;width:81px;height:22px"></div>
<div class="t ns" id="tk4" style="left:648px;top:748px;font-size:12px"><span class="sx" style="transform:scaleX(0.8696)">Project1 - ...</span></div>
<svg style="left:630px;top:747px" width="16" height="16" viewBox="0 0 16 16"><path fill="#000" d="M4 0h1v1h-1zM3 1h1v1h-1zM5 1h1v1h-1zM4 2h1v1h-1zM6 2h1v1h-1zM5 3h1v1h-1zM1 4h1v1h-1zM5 4h1v1h-1zM0 5h1v1h-1zM2 5h1v1h-1zM4 5h2v1h-2zM1 6h1v1h-1zM3 6h1v1h-1zM6 6h3v1h-3zM2 7h4v1h-4zM9 7h4v1h-4zM2 8h1v1h-1zM6 8h3v1h-3zM12 8h1v1h-1zM2 9h1v1h-1zM6 9h1v1h-1zM12 9h1v1h-1zM2 10h1v1h-1zM7 10h1v1h-1zM12 10h1v1h-1zM2 11h1v1h-1zM6 11h1v1h-1zM12 11h1v1h-1zM2 12h1v1h-1zM7 12h2v1h-2zM12 12h1v1h-1zM2 13h3v1h-3zM6 13h2v1h-2zM12 13h1v1h-1zM5 14h4v1h-4zM12 14h1v1h-1zM8 15h5v1h-5z"/><path fill="#008000" d="M4 1h1v1h-1zM5 2h1v1h-1z"/><path fill="#ffff00" d="M1 5h1v1h-1zM2 6h1v1h-1z"/><path fill="#00ffff" d="M4 6h2v1h-2zM6 7h3v1h-3zM9 8h3v1h-3z"/><path fill="#fff" d="M3 8h3v1h-3zM3 9h1v1h-1zM5 9h1v1h-1zM7 9h5v1h-5zM3 10h3v1h-3zM8 10h1v1h-1zM10 10h2v1h-2zM3 11h1v1h-1zM5 11h1v1h-1zM7 11h3v1h-3zM11 11h1v1h-1zM3 12h3v1h-3zM9 12h1v1h-1zM11 12h1v1h-1zM8 13h4v1h-4zM9 14h3v1h-3z"/><path fill="#808080" d="M4 9h1v1h-1zM6 10h1v1h-1zM9 10h1v1h-1zM4 11h1v1h-1zM10 11h1v1h-1zM10 12h1v1h-1zM13 12h3v1h-3zM13 13h2v1h-2zM13 14h1v1h-1z"/><path fill="#ff0000" d="M6 12h1v1h-1zM5 13h1v1h-1z"/></svg>
<div class="a pressed dith" style="left:710px;top:744px;width:81px;height:22px"></div>
<div class="t b" id="tk5" style="left:732px;top:749px;font-size:12px"><span class="sx" style="transform:scaleX(1.0062)">Project...</span></div>
<svg style="left:715px;top:748px" width="16" height="16" viewBox="0 0 16 16"><path fill="#000" d="M4 0h1v1h-1zM3 1h1v1h-1zM5 1h1v1h-1zM4 2h1v1h-1zM6 2h1v1h-1zM5 3h1v1h-1zM1 4h1v1h-1zM5 4h1v1h-1zM0 5h1v1h-1zM2 5h1v1h-1zM4 5h2v1h-2zM1 6h1v1h-1zM3 6h1v1h-1zM6 6h3v1h-3zM2 7h4v1h-4zM9 7h4v1h-4zM2 8h1v1h-1zM6 8h3v1h-3zM12 8h1v1h-1zM2 9h1v1h-1zM6 9h1v1h-1zM12 9h1v1h-1zM2 10h1v1h-1zM7 10h1v1h-1zM12 10h1v1h-1zM2 11h1v1h-1zM6 11h1v1h-1zM12 11h1v1h-1zM2 12h1v1h-1zM7 12h2v1h-2zM12 12h1v1h-1zM2 13h3v1h-3zM6 13h2v1h-2zM12 13h1v1h-1zM5 14h4v1h-4zM12 14h1v1h-1zM8 15h5v1h-5z"/><path fill="#008000" d="M4 1h1v1h-1zM5 2h1v1h-1z"/><path fill="#ffff00" d="M1 5h1v1h-1zM2 6h1v1h-1z"/><path fill="#00ffff" d="M4 6h2v1h-2zM6 7h3v1h-3zM9 8h3v1h-3z"/><path fill="#fff" d="M3 8h3v1h-3zM3 9h1v1h-1zM5 9h1v1h-1zM7 9h5v1h-5zM3 10h3v1h-3zM8 10h1v1h-1zM10 10h2v1h-2zM3 11h1v1h-1zM5 11h1v1h-1zM7 11h3v1h-3zM11 11h1v1h-1zM3 12h3v1h-3zM9 12h1v1h-1zM11 12h1v1h-1zM8 13h4v1h-4zM9 14h3v1h-3z"/><path fill="#808080" d="M4 9h1v1h-1zM6 10h1v1h-1zM9 10h1v1h-1zM4 11h1v1h-1zM10 11h1v1h-1zM10 12h1v1h-1zM13 12h3v1h-3zM13 13h2v1h-2zM13 14h1v1h-1z"/><path fill="#ff0000" d="M6 12h1v1h-1zM5 13h1v1h-1z"/></svg>
<div class="a btn" style="left:794px;top:744px;width:81px;height:22px"></div>
<div class="t ns" id="tk6" style="left:817px;top:748px;font-size:12px"><span class="sx" style="transform:scaleX(0.7787)">Form1</span></div>
<svg style="left:800px;top:750px" width="13" height="12" viewBox="0 0 13 12"><path fill="#000" d="M0 0h3v1h-3zM0 1h1v1h-1zM3 1h3v1h-3zM0 2h1v1h-1zM7 2h3v1h-3zM0 3h1v1h-1zM9 3h1v1h-1zM0 4h1v1h-1zM9 4h1v1h-1zM0 5h1v1h-1zM9 5h1v1h-1zM0 6h1v1h-1zM9 6h1v1h-1zM0 7h1v1h-1zM9 7h1v1h-1zM0 8h1v1h-1zM9 8h1v1h-1zM0 9h3v1h-3zM9 9h1v1h-1zM3 10h4v1h-4zM9 10h1v1h-1zM7 11h3v1h-3z"/><path fill="#00ffff" d="M1 1h2v1h-2zM3 2h4v1h-4zM7 3h2v1h-2z"/><path fill="#fff" d="M1 2h2v1h-2zM1 3h6v1h-6zM1 4h8v1h-8zM1 5h8v1h-8zM1 6h8v1h-8zM1 7h8v1h-8zM1 8h8v1h-8zM3 9h6v1h-6zM7 10h2v1h-2z"/><path fill="#808080" d="M10 9h3v1h-3zM10 10h2v1h-2zM10 11h1v1h-1z"/></svg>
<div class="sep" style="left:888px;top:744px;height:22px"></div>
<div class="a thin-s" style="left:892px;top:744px;width:130px;height:22px"></div>
<div class="a" style="left:912px;top:747px;width:16px;height:16px;background:#000080"></div>
<div class="t ns" id="en" style="left:914px;top:748px;color:#fff"><span class="sx" style="transform:scaleX(0.9652)">En</span></div>
<svg style="left:895px;top:747px" width="16" height="15" viewBox="0 0 16 15"><path fill="#000" d="M0 0h16v1h-16zM0 1h2v1h-2zM14 1h2v1h-2zM0 2h1v1h-1zM2 2h1v1h-1zM13 2h1v1h-1zM15 2h1v1h-1zM0 3h1v1h-1zM3 3h1v1h-1zM12 3h1v1h-1zM15 3h1v1h-1zM0 4h1v1h-1zM4 4h1v1h-1zM11 4h1v1h-1zM15 4h1v1h-1zM0 5h1v1h-1zM5 5h1v1h-1zM10 5h1v1h-1zM15 5h1v1h-1zM0 6h1v1h-1zM6 6h1v1h-1zM9 6h1v1h-1zM0 7h1v1h-1zM7 7h2v1h-2zM15 7h1v1h-1zM0 8h1v1h-1zM6 8h1v1h-1zM10 8h1v1h-1zM15 8h1v1h-1zM0 9h1v1h-1zM11 9h1v1h-1zM15 9h1v1h-1zM0 10h1v1h-1zM6 10h1v1h-1zM12 10h1v1h-1zM15 10h1v1h-1zM0 11h1v1h-1zM5 11h1v1h-1zM13 11h1v1h-1zM15 11h1v1h-1zM0 12h1v1h-1zM4 12h1v1h-1zM14 12h2v1h-2zM3 13h13v1h-13z"/><path fill="#ff0000" d="M10 6h6v1h-6zM9 7h2v1h-2zM7 8h3v1h-3zM5 9h3v1h-3zM4 10h2v1h-2zM2 11h3v1h-3zM1 12h3v1h-3zM0 13h3v1h-3zM0 14h2v1h-2z"/></svg>
<svg style="left:930px;top:747px" width="16" height="14" viewBox="0 0 16 14"><path fill="#000" d="M7 0h1v1h-1zM6 1h2v1h-2zM5 2h1v1h-1zM7 2h1v1h-1zM4 3h1v1h-1zM7 3h1v1h-1zM0 4h5v1h-5zM7 4h1v1h-1zM9 4h1v1h-1zM0 5h1v1h-1zM7 5h1v1h-1zM10 5h1v1h-1zM0 6h1v1h-1zM7 6h1v1h-1zM10 6h1v1h-1zM0 7h1v1h-1zM7 7h1v1h-1zM10 7h1v1h-1zM0 8h1v1h-1zM7 8h1v1h-1zM10 8h1v1h-1zM0 9h5v1h-5zM7 9h1v1h-1zM9 9h1v1h-1zM4 10h1v1h-1zM7 10h1v1h-1zM5 11h1v1h-1zM7 11h1v1h-1zM6 12h2v1h-2zM7 13h1v1h-1z"/><path fill="#ffff00" d="M6 2h1v1h-1zM6 3h1v1h-1zM5 4h1v1h-1zM1 5h1v1h-1zM3 5h1v1h-1zM5 5h1v1h-1zM2 6h1v1h-1zM4 6h1v1h-1zM6 6h1v1h-1zM1 7h1v1h-1zM3 7h1v1h-1zM5 7h1v1h-1zM2 8h1v1h-1zM4 8h1v1h-1zM6 8h1v1h-1zM6 9h1v1h-1zM5 10h1v1h-1zM6 11h1v1h-1z"/><path fill="#808080" d="M13 2h1v1h-1zM12 3h1v1h-1zM11 4h1v1h-1zM12 6h3v1h-3zM12 8h3v1h-3zM11 10h1v1h-1zM12 11h1v1h-1zM13 12h1v1h-1z"/><path fill="#fff" d="M5 3h1v1h-1zM6 4h1v1h-1zM2 5h1v1h-1zM4 5h1v1h-1zM6 5h1v1h-1zM1 6h1v1h-1zM3 6h1v1h-1zM5 6h1v1h-1zM2 7h1v1h-1zM4 7h1v1h-1zM6 7h1v1h-1zM1 8h1v1h-1zM3 8h1v1h-1zM5 8h1v1h-1zM5 9h1v1h-1zM6 10h1v1h-1z"/></svg>
<svg style="left:946px;top:747px" width="16" height="15" viewBox="0 0 16 15"><path fill="#000" d="M0 0h16v1h-16zM0 1h2v1h-2zM11 1h2v1h-2zM15 1h1v1h-1zM0 2h1v1h-1zM2 2h1v1h-1zM9 2h2v1h-2zM13 2h1v1h-1zM15 2h1v1h-1zM0 3h1v1h-1zM3 3h1v1h-1zM8 3h1v1h-1zM11 3h2v1h-2zM14 3h2v1h-2zM0 4h1v1h-1zM4 4h1v1h-1zM8 4h1v1h-1zM11 4h1v1h-1zM15 4h1v1h-1zM0 5h1v1h-1zM5 5h1v1h-1zM8 5h1v1h-1zM12 5h1v1h-1zM15 5h1v1h-1zM0 6h1v1h-1zM6 6h1v1h-1zM8 6h1v1h-1zM15 6h1v1h-1zM0 7h1v1h-1zM7 7h1v1h-1zM14 7h1v1h-1zM0 8h1v1h-1zM6 8h1v1h-1zM10 8h3v1h-3zM15 8h1v1h-1zM0 9h1v1h-1zM5 9h1v1h-1zM9 9h1v1h-1zM12 9h1v1h-1zM15 9h1v1h-1zM0 10h1v1h-1zM4 10h1v1h-1zM8 10h1v1h-1zM13 10h1v1h-1zM15 10h1v1h-1zM0 11h1v1h-1zM3 11h1v1h-1zM7 11h1v1h-1zM14 11h2v1h-2zM0 12h1v1h-1zM2 12h1v1h-1zM6 12h10v1h-10zM0 13h1v1h-1zM2 13h1v1h-1zM5 13h1v1h-1zM2 14h3v1h-3z"/><path fill="#ffff00" d="M11 2h2v1h-2zM9 3h2v1h-2zM9 4h2v1h-2zM14 4h1v1h-1zM9 5h3v1h-3zM13 5h2v1h-2zM9 6h6v1h-6zM8 7h6v1h-6zM7 8h3v1h-3zM6 9h3v1h-3zM5 10h3v1h-3zM4 11h3v1h-3zM3 12h3v1h-3zM3 13h2v1h-2z"/><path fill="#ff0000" d="M15 7h1v1h-1zM13 8h2v1h-2zM1 13h1v1h-1zM0 14h2v1h-2z"/></svg>
<svg style="left:963px;top:750px" width="16" height="11" viewBox="0 0 16 11"><path fill="#ff0000" d="M4 0h8v1h-8zM2 1h2v1h-2zM12 1h2v1h-2zM1 2h1v1h-1zM4 2h8v1h-8zM14 2h1v1h-1zM0 3h1v1h-1zM3 3h1v1h-1zM5 3h1v1h-1zM10 3h1v1h-1zM12 3h1v1h-1zM15 3h1v1h-1zM0 4h1v1h-1zM2 4h1v1h-1zM5 4h1v1h-1zM10 4h1v1h-1zM13 4h1v1h-1zM15 4h1v1h-1zM0 5h1v1h-1zM4 5h1v1h-1zM11 5h1v1h-1zM14 5h1v1h-1zM0 6h1v1h-1zM3 6h1v1h-1zM12 6h1v1h-1zM0 7h1v1h-1zM3 7h1v1h-1zM12 7h1v1h-1zM1 8h1v1h-1zM3 8h1v1h-1zM12 8h1v1h-1zM2 9h2v1h-2zM12 9h1v1h-1zM3 10h10v1h-10z"/><path fill="#0000ff" d="M4 1h8v1h-8zM2 2h2v1h-2zM12 2h2v1h-2zM1 3h2v1h-2zM6 3h4v1h-4zM13 3h2v1h-2zM1 4h1v1h-1zM6 4h4v1h-4zM14 4h1v1h-1zM5 5h6v1h-6zM4 6h1v1h-1zM6 6h1v1h-1zM8 6h1v1h-1zM10 6h2v1h-2zM4 7h8v1h-8zM4 8h1v1h-1zM6 8h1v1h-1zM8 8h1v1h-1zM10 8h2v1h-2zM4 9h8v1h-8z"/><path fill="#fff" d="M5 6h1v1h-1zM7 6h1v1h-1zM9 6h1v1h-1zM5 8h1v1h-1zM7 8h1v1h-1zM9 8h1v1h-1z"/></svg>
<div class="t ns" id="clock" style="left:988px;top:749px;font-size:12px"><span class="sx" style="transform:scaleX(0.8758)">18:52</span></div>
</body></html>
